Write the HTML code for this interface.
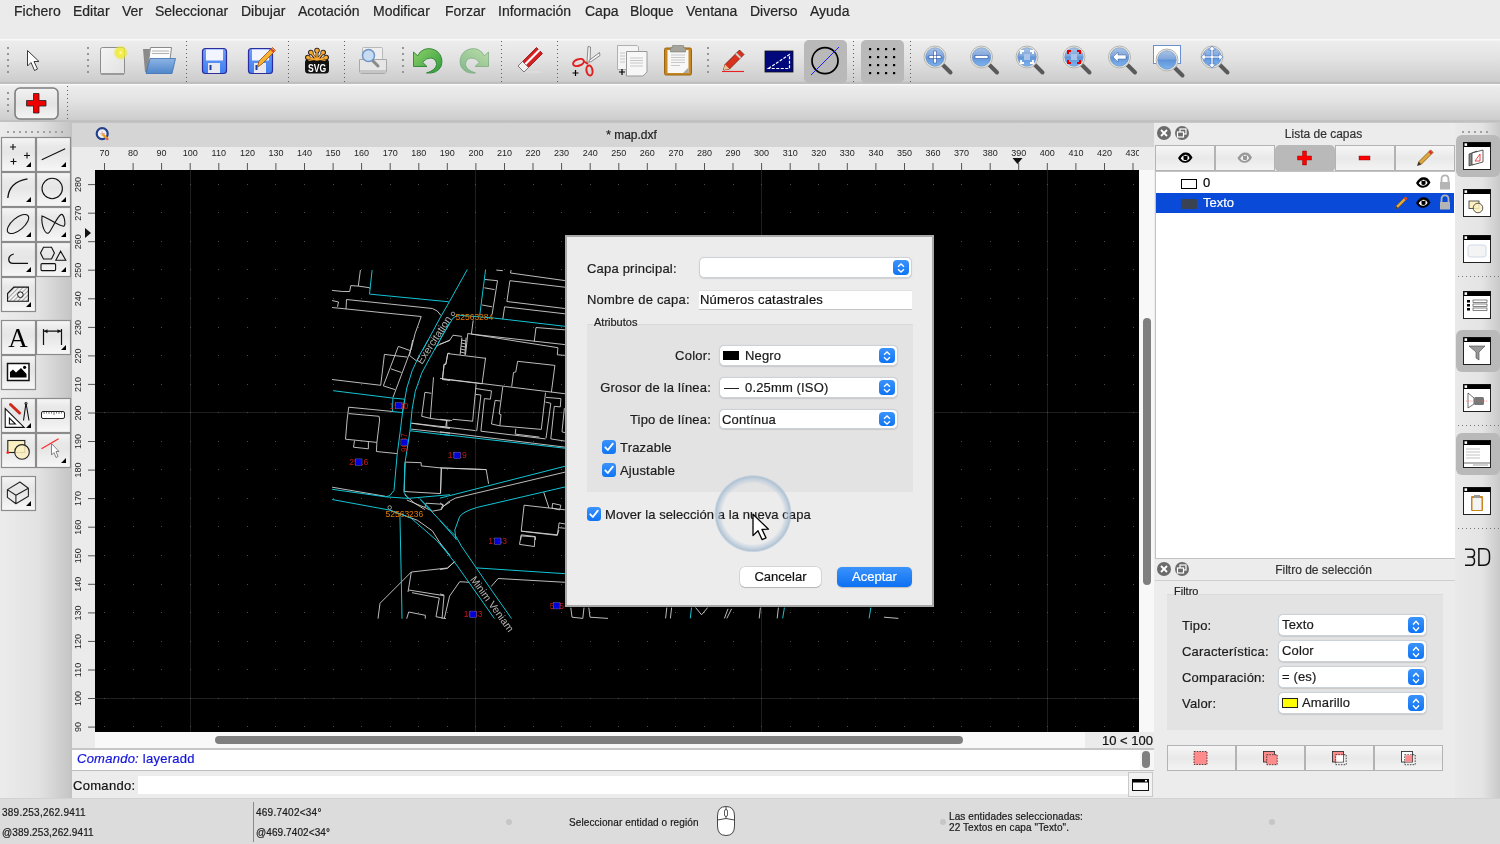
<!DOCTYPE html>
<html><head><meta charset="utf-8">
<style>
*{box-sizing:border-box;margin:0;padding:0}
body{will-change:transform}
.a,.menu span,.lbl,.cb .tx,.btn{-webkit-text-stroke:0.2px currentColor}
html,body{width:1500px;height:844px;overflow:hidden;background:#ececec;font-family:"Liberation Sans",sans-serif;color:#222}
.a{position:absolute}
.menu{position:absolute;top:0;left:0;width:1500px;height:39px;background:#ebebeb}
.menu span{position:absolute;top:3px;font-size:14px;color:#262626;line-height:17px}
.tb{position:absolute;left:0;width:1500px;background:linear-gradient(#f8f8f8 0px,#f8f8f8 1px,#ededed 2px,#e2e2e2 45%,#cdcdcd 94%,#bcbcbc 97%,#c2c2c2 100%)}
.sep{position:absolute;width:0;border-left:1px dotted #6a6a6a}
.hdl{position:absolute;width:3px;background:radial-gradient(circle,#8e8e8e 1.1px,transparent 1.3px) 0 0/3px 5px}
.hdlh{position:absolute;height:3px;background:radial-gradient(circle,#9a9a9a 1.1px,transparent 1.3px) 0 0/6px 3px}
.tbtn{position:absolute;width:35px;height:35px;border:1px solid #8f8f8f;background:linear-gradient(#e2e2e2,#f6f6f6)}
.ruler{font-size:9px;color:#222}
.ic{position:absolute}
</style></head><body>

<style>
.cb{position:absolute;background:#fff;border:1px solid #cdd2d8;border-radius:5px;box-shadow:0 0.5px 1px rgba(0,0,0,0.12)}
.cb .st{position:absolute;right:2px;top:2px;width:16px;bottom:2px;border-radius:4px;background:linear-gradient(#3b93fb,#0f74f4)}
.cb .st svg{position:absolute;left:4px;top:3px}
.cb .tx{position:absolute;left:3px;top:1px;font-size:13px;color:#1a1a1a;line-height:17px;letter-spacing:0.15px}
.lbl{position:absolute;font-size:13px;color:#1c1c1c;line-height:15px;white-space:nowrap;letter-spacing:0.2px}
.dbtn{position:absolute;border:1px solid #b3b3b3;background:linear-gradient(#f6f6f6,#e9e9e9 50%,#f3f3f3)}
</style>
<style>
.chk{position:absolute;width:14px;height:14px;border-radius:3.5px;background:linear-gradient(#3b93fb,#0f74f4)}
.chk svg{position:absolute;left:0;top:0}
.btn{position:absolute;border-radius:5px;font-size:13px;text-align:center;line-height:20px}
</style>
<!-- MENU -->
<div class="menu">
<span style="left:14px">Fichero</span>
<span style="left:73px">Editar</span>
<span style="left:122px">Ver</span>
<span style="left:155px">Seleccionar</span>
<span style="left:241px">Dibujar</span>
<span style="left:298px">Acotación</span>
<span style="left:373px">Modificar</span>
<span style="left:445px">Forzar</span>
<span style="left:498px">Información</span>
<span style="left:585px">Capa</span>
<span style="left:630px">Bloque</span>
<span style="left:686px">Ventana</span>
<span style="left:750px">Diverso</span>
<span style="left:810px">Ayuda</span>
</div>

<!-- TOOLBAR 1 -->
<div class="tb" style="top:39px;height:45px"></div>
<!-- TOOLBAR 2 -->
<div class="tb" style="top:84px;height:38px"></div>

<!-- LEFT TOOLBOX -->
<div class="a" style="left:0;top:122px;width:70px;height:676px;background:linear-gradient(90deg,#ececec 0%,#e2e2e2 55%,#c6c6c6 100%)"></div>
<div class="a" style="left:70px;top:122px;width:2px;height:676px;background:#c3c3c3"></div>

<!-- MDI -->
<div class="a" style="left:72px;top:122px;width:1082px;height:25px;background:#d5d5d5;border-top:1px solid #c4c4c4"></div>
<div class="a" style="left:72px;top:128px;width:1082px;text-align:center;font-size:12px;color:#222;padding-left:37px">* map.dxf</div>
<div class="a" style="left:72px;top:147px;width:1082px;height:23px;background:#ebebeb"></div>
<div class="a" style="left:72px;top:170px;width:23px;height:578px;background:#ebebeb"></div>
<div class="a" style="left:95px;top:170px;width:1044px;height:562px;background:#000"></div>
<div class="a" style="left:1139px;top:170px;width:15px;height:578px;background:#f8f8f8"></div>
<div class="a" style="left:95px;top:732px;width:1044px;height:16px;background:#f8f8f8"></div>
<div class="a" style="left:1085px;top:732px;width:69px;height:16px;background:#ebebeb"></div>
<div class="a" style="left:1102px;top:733px;font-size:13px;color:#111;line-height:15px">10 &lt; 100</div>
<!-- scrollbars -->
<div class="a" style="left:215px;top:736px;width:748px;height:8px;border-radius:4px;background:#7f7f7f"></div>
<div class="a" style="left:1143px;top:318px;width:8px;height:267px;border-radius:4px;background:#7f7f7f"></div>

<!-- COMMAND -->
<div class="a" style="left:72px;top:748px;width:1082px;height:2px;background:#c6c6c6"></div>
<div class="a" style="left:72px;top:750px;width:1082px;height:20px;background:#fff"></div>
<div class="a" style="left:77px;top:750px;font-size:13px;color:#1414dc;line-height:17px;letter-spacing:0.25px"><i>Comando:</i> layeradd</div>
<div class="a" style="left:1140px;top:750px;width:14px;height:20px;background:#f6f6f6"></div>
<div class="a" style="left:1142px;top:751px;width:8px;height:17px;border-radius:4px;background:#7f7f7f"></div>
<div class="a" style="left:72px;top:770px;width:1082px;height:1px;background:#bdbdbd"></div>
<div class="a" style="left:72px;top:771px;width:1082px;height:27px;background:#ececec"></div>
<div class="a" style="left:73px;top:777px;font-size:13px;color:#111;line-height:17px;letter-spacing:0.3px">Comando:</div>
<div class="a" style="left:138px;top:776px;width:990px;height:18px;background:#fff"></div>
<div class="a" style="left:1128px;top:772px;width:25px;height:25px;background:#f2f2f2;border:1px solid #c9c9c9"></div>

<!-- STATUS BAR -->
<div class="a" style="left:0;top:798px;width:1500px;height:46px;background:#dcdcdc;border-top:1px solid #d2d2d2"></div>

<svg class="a" style="left:72px;top:147px" width="1067" height="23" font-family="Liberation Sans" font-size="9" fill="#1e1e1e"><line x1="32.5" y1="16" x2="32.5" y2="23" stroke="#555" stroke-width="1"/><text x="32.5" y="8.6" text-anchor="middle">70</text><line x1="61.1" y1="16" x2="61.1" y2="23" stroke="#555" stroke-width="1"/><text x="61.1" y="8.6" text-anchor="middle">80</text><line x1="89.6" y1="16" x2="89.6" y2="23" stroke="#555" stroke-width="1"/><text x="89.6" y="8.6" text-anchor="middle">90</text><line x1="118.2" y1="16" x2="118.2" y2="23" stroke="#555" stroke-width="1"/><text x="118.2" y="8.6" text-anchor="middle">100</text><line x1="146.8" y1="16" x2="146.8" y2="23" stroke="#555" stroke-width="1"/><text x="146.8" y="8.6" text-anchor="middle">110</text><line x1="175.4" y1="16" x2="175.4" y2="23" stroke="#555" stroke-width="1"/><text x="175.4" y="8.6" text-anchor="middle">120</text><line x1="203.9" y1="16" x2="203.9" y2="23" stroke="#555" stroke-width="1"/><text x="203.9" y="8.6" text-anchor="middle">130</text><line x1="232.5" y1="16" x2="232.5" y2="23" stroke="#555" stroke-width="1"/><text x="232.5" y="8.6" text-anchor="middle">140</text><line x1="261.1" y1="16" x2="261.1" y2="23" stroke="#555" stroke-width="1"/><text x="261.1" y="8.6" text-anchor="middle">150</text><line x1="289.6" y1="16" x2="289.6" y2="23" stroke="#555" stroke-width="1"/><text x="289.6" y="8.6" text-anchor="middle">160</text><line x1="318.2" y1="16" x2="318.2" y2="23" stroke="#555" stroke-width="1"/><text x="318.2" y="8.6" text-anchor="middle">170</text><line x1="346.8" y1="16" x2="346.8" y2="23" stroke="#555" stroke-width="1"/><text x="346.8" y="8.6" text-anchor="middle">180</text><line x1="375.3" y1="16" x2="375.3" y2="23" stroke="#555" stroke-width="1"/><text x="375.3" y="8.6" text-anchor="middle">190</text><line x1="403.9" y1="16" x2="403.9" y2="23" stroke="#555" stroke-width="1"/><text x="403.9" y="8.6" text-anchor="middle">200</text><line x1="432.5" y1="16" x2="432.5" y2="23" stroke="#555" stroke-width="1"/><text x="432.5" y="8.6" text-anchor="middle">210</text><line x1="461.0" y1="16" x2="461.0" y2="23" stroke="#555" stroke-width="1"/><text x="461.0" y="8.6" text-anchor="middle">220</text><line x1="489.6" y1="16" x2="489.6" y2="23" stroke="#555" stroke-width="1"/><text x="489.6" y="8.6" text-anchor="middle">230</text><line x1="518.2" y1="16" x2="518.2" y2="23" stroke="#555" stroke-width="1"/><text x="518.2" y="8.6" text-anchor="middle">240</text><line x1="546.8" y1="16" x2="546.8" y2="23" stroke="#555" stroke-width="1"/><text x="546.8" y="8.6" text-anchor="middle">250</text><line x1="575.3" y1="16" x2="575.3" y2="23" stroke="#555" stroke-width="1"/><text x="575.3" y="8.6" text-anchor="middle">260</text><line x1="603.9" y1="16" x2="603.9" y2="23" stroke="#555" stroke-width="1"/><text x="603.9" y="8.6" text-anchor="middle">270</text><line x1="632.5" y1="16" x2="632.5" y2="23" stroke="#555" stroke-width="1"/><text x="632.5" y="8.6" text-anchor="middle">280</text><line x1="661.0" y1="16" x2="661.0" y2="23" stroke="#555" stroke-width="1"/><text x="661.0" y="8.6" text-anchor="middle">290</text><line x1="689.6" y1="16" x2="689.6" y2="23" stroke="#555" stroke-width="1"/><text x="689.6" y="8.6" text-anchor="middle">300</text><line x1="718.2" y1="16" x2="718.2" y2="23" stroke="#555" stroke-width="1"/><text x="718.2" y="8.6" text-anchor="middle">310</text><line x1="746.8" y1="16" x2="746.8" y2="23" stroke="#555" stroke-width="1"/><text x="746.8" y="8.6" text-anchor="middle">320</text><line x1="775.3" y1="16" x2="775.3" y2="23" stroke="#555" stroke-width="1"/><text x="775.3" y="8.6" text-anchor="middle">330</text><line x1="803.9" y1="16" x2="803.9" y2="23" stroke="#555" stroke-width="1"/><text x="803.9" y="8.6" text-anchor="middle">340</text><line x1="832.5" y1="16" x2="832.5" y2="23" stroke="#555" stroke-width="1"/><text x="832.5" y="8.6" text-anchor="middle">350</text><line x1="861.0" y1="16" x2="861.0" y2="23" stroke="#555" stroke-width="1"/><text x="861.0" y="8.6" text-anchor="middle">360</text><line x1="889.6" y1="16" x2="889.6" y2="23" stroke="#555" stroke-width="1"/><text x="889.6" y="8.6" text-anchor="middle">370</text><line x1="918.2" y1="16" x2="918.2" y2="23" stroke="#555" stroke-width="1"/><text x="918.2" y="8.6" text-anchor="middle">380</text><line x1="946.7" y1="16" x2="946.7" y2="23" stroke="#555" stroke-width="1"/><text x="946.7" y="8.6" text-anchor="middle">390</text><line x1="975.3" y1="16" x2="975.3" y2="23" stroke="#555" stroke-width="1"/><text x="975.3" y="8.6" text-anchor="middle">400</text><line x1="1003.9" y1="16" x2="1003.9" y2="23" stroke="#555" stroke-width="1"/><text x="1003.9" y="8.6" text-anchor="middle">410</text><line x1="1032.5" y1="16" x2="1032.5" y2="23" stroke="#555" stroke-width="1"/><text x="1032.5" y="8.6" text-anchor="middle">420</text><line x1="1061.0" y1="16" x2="1061.0" y2="23" stroke="#555" stroke-width="1"/><text x="1061.0" y="8.6" text-anchor="middle">430</text><path d="M940.5 11 L950.5 11 L945.5 17 Z" fill="#111"/></svg>
<svg class="a" style="left:72px;top:170px" width="23" height="562" font-family="Liberation Sans" font-size="9" fill="#1e1e1e"><line x1="16" y1="14.6" x2="23" y2="14.6" stroke="#555" stroke-width="1"/><text transform="translate(9.2 14.6) rotate(-90)" text-anchor="middle">280</text><line x1="16" y1="43.2" x2="23" y2="43.2" stroke="#555" stroke-width="1"/><text transform="translate(9.2 43.2) rotate(-90)" text-anchor="middle">270</text><line x1="16" y1="71.7" x2="23" y2="71.7" stroke="#555" stroke-width="1"/><text transform="translate(9.2 71.7) rotate(-90)" text-anchor="middle">260</text><line x1="16" y1="100.2" x2="23" y2="100.2" stroke="#555" stroke-width="1"/><text transform="translate(9.2 100.2) rotate(-90)" text-anchor="middle">250</text><line x1="16" y1="128.8" x2="23" y2="128.8" stroke="#555" stroke-width="1"/><text transform="translate(9.2 128.8) rotate(-90)" text-anchor="middle">240</text><line x1="16" y1="157.4" x2="23" y2="157.4" stroke="#555" stroke-width="1"/><text transform="translate(9.2 157.4) rotate(-90)" text-anchor="middle">230</text><line x1="16" y1="185.9" x2="23" y2="185.9" stroke="#555" stroke-width="1"/><text transform="translate(9.2 185.9) rotate(-90)" text-anchor="middle">220</text><line x1="16" y1="214.4" x2="23" y2="214.4" stroke="#555" stroke-width="1"/><text transform="translate(9.2 214.4) rotate(-90)" text-anchor="middle">210</text><line x1="16" y1="243.0" x2="23" y2="243.0" stroke="#555" stroke-width="1"/><text transform="translate(9.2 243.0) rotate(-90)" text-anchor="middle">200</text><line x1="16" y1="271.5" x2="23" y2="271.5" stroke="#555" stroke-width="1"/><text transform="translate(9.2 271.5) rotate(-90)" text-anchor="middle">190</text><line x1="16" y1="300.1" x2="23" y2="300.1" stroke="#555" stroke-width="1"/><text transform="translate(9.2 300.1) rotate(-90)" text-anchor="middle">180</text><line x1="16" y1="328.6" x2="23" y2="328.6" stroke="#555" stroke-width="1"/><text transform="translate(9.2 328.6) rotate(-90)" text-anchor="middle">170</text><line x1="16" y1="357.2" x2="23" y2="357.2" stroke="#555" stroke-width="1"/><text transform="translate(9.2 357.2) rotate(-90)" text-anchor="middle">160</text><line x1="16" y1="385.8" x2="23" y2="385.8" stroke="#555" stroke-width="1"/><text transform="translate(9.2 385.8) rotate(-90)" text-anchor="middle">150</text><line x1="16" y1="414.3" x2="23" y2="414.3" stroke="#555" stroke-width="1"/><text transform="translate(9.2 414.3) rotate(-90)" text-anchor="middle">140</text><line x1="16" y1="442.9" x2="23" y2="442.9" stroke="#555" stroke-width="1"/><text transform="translate(9.2 442.9) rotate(-90)" text-anchor="middle">130</text><line x1="16" y1="471.4" x2="23" y2="471.4" stroke="#555" stroke-width="1"/><text transform="translate(9.2 471.4) rotate(-90)" text-anchor="middle">120</text><line x1="16" y1="500.0" x2="23" y2="500.0" stroke="#555" stroke-width="1"/><text transform="translate(9.2 500.0) rotate(-90)" text-anchor="middle">110</text><line x1="16" y1="528.5" x2="23" y2="528.5" stroke="#555" stroke-width="1"/><text transform="translate(9.2 528.5) rotate(-90)" text-anchor="middle">100</text><line x1="16" y1="557.1" x2="23" y2="557.1" stroke="#555" stroke-width="1"/><text transform="translate(9.2 557.1) rotate(-90)" text-anchor="middle">90</text><path d="M13 58.1 L19 63.1 L13 68.1 Z" fill="#111"/></svg>
<svg class="a" style="left:95px;top:170px" width="1044" height="562"><line x1="95.5" y1="0" x2="95.5" y2="562" stroke="#1f1f1f" stroke-width="1"/><line x1="380.5" y1="0" x2="380.5" y2="562" stroke="#1f1f1f" stroke-width="1"/><line x1="666.5" y1="0" x2="666.5" y2="562" stroke="#1f1f1f" stroke-width="1"/><line x1="952.5" y1="0" x2="952.5" y2="562" stroke="#1f1f1f" stroke-width="1"/><line x1="0" y1="242.5" x2="1044" y2="242.5" stroke="#1f1f1f" stroke-width="1"/><line x1="0" y1="528.5" x2="1044" y2="528.5" stroke="#1f1f1f" stroke-width="1"/><rect x="9" y="556" width="1" height="1" fill="#4c4c4c"/><rect x="9" y="528" width="1" height="1" fill="#4c4c4c"/><rect x="9" y="499" width="1" height="1" fill="#4c4c4c"/><rect x="9" y="471" width="1" height="1" fill="#4c4c4c"/><rect x="9" y="442" width="1" height="1" fill="#4c4c4c"/><rect x="9" y="414" width="1" height="1" fill="#4c4c4c"/><rect x="9" y="385" width="1" height="1" fill="#4c4c4c"/><rect x="9" y="356" width="1" height="1" fill="#4c4c4c"/><rect x="9" y="328" width="1" height="1" fill="#4c4c4c"/><rect x="9" y="299" width="1" height="1" fill="#4c4c4c"/><rect x="9" y="271" width="1" height="1" fill="#4c4c4c"/><rect x="9" y="242" width="1" height="1" fill="#4c4c4c"/><rect x="9" y="214" width="1" height="1" fill="#4c4c4c"/><rect x="9" y="185" width="1" height="1" fill="#4c4c4c"/><rect x="9" y="157" width="1" height="1" fill="#4c4c4c"/><rect x="9" y="128" width="1" height="1" fill="#4c4c4c"/><rect x="9" y="99" width="1" height="1" fill="#4c4c4c"/><rect x="9" y="71" width="1" height="1" fill="#4c4c4c"/><rect x="9" y="42" width="1" height="1" fill="#4c4c4c"/><rect x="9" y="14" width="1" height="1" fill="#4c4c4c"/><rect x="38" y="556" width="1" height="1" fill="#4c4c4c"/><rect x="38" y="528" width="1" height="1" fill="#4c4c4c"/><rect x="38" y="499" width="1" height="1" fill="#4c4c4c"/><rect x="38" y="471" width="1" height="1" fill="#4c4c4c"/><rect x="38" y="442" width="1" height="1" fill="#4c4c4c"/><rect x="38" y="414" width="1" height="1" fill="#4c4c4c"/><rect x="38" y="385" width="1" height="1" fill="#4c4c4c"/><rect x="38" y="356" width="1" height="1" fill="#4c4c4c"/><rect x="38" y="328" width="1" height="1" fill="#4c4c4c"/><rect x="38" y="299" width="1" height="1" fill="#4c4c4c"/><rect x="38" y="271" width="1" height="1" fill="#4c4c4c"/><rect x="38" y="242" width="1" height="1" fill="#4c4c4c"/><rect x="38" y="214" width="1" height="1" fill="#4c4c4c"/><rect x="38" y="185" width="1" height="1" fill="#4c4c4c"/><rect x="38" y="157" width="1" height="1" fill="#4c4c4c"/><rect x="38" y="128" width="1" height="1" fill="#4c4c4c"/><rect x="38" y="99" width="1" height="1" fill="#4c4c4c"/><rect x="38" y="71" width="1" height="1" fill="#4c4c4c"/><rect x="38" y="42" width="1" height="1" fill="#4c4c4c"/><rect x="38" y="14" width="1" height="1" fill="#4c4c4c"/><rect x="66" y="556" width="1" height="1" fill="#4c4c4c"/><rect x="66" y="528" width="1" height="1" fill="#4c4c4c"/><rect x="66" y="499" width="1" height="1" fill="#4c4c4c"/><rect x="66" y="471" width="1" height="1" fill="#4c4c4c"/><rect x="66" y="442" width="1" height="1" fill="#4c4c4c"/><rect x="66" y="414" width="1" height="1" fill="#4c4c4c"/><rect x="66" y="385" width="1" height="1" fill="#4c4c4c"/><rect x="66" y="356" width="1" height="1" fill="#4c4c4c"/><rect x="66" y="328" width="1" height="1" fill="#4c4c4c"/><rect x="66" y="299" width="1" height="1" fill="#4c4c4c"/><rect x="66" y="271" width="1" height="1" fill="#4c4c4c"/><rect x="66" y="242" width="1" height="1" fill="#4c4c4c"/><rect x="66" y="214" width="1" height="1" fill="#4c4c4c"/><rect x="66" y="185" width="1" height="1" fill="#4c4c4c"/><rect x="66" y="157" width="1" height="1" fill="#4c4c4c"/><rect x="66" y="128" width="1" height="1" fill="#4c4c4c"/><rect x="66" y="99" width="1" height="1" fill="#4c4c4c"/><rect x="66" y="71" width="1" height="1" fill="#4c4c4c"/><rect x="66" y="42" width="1" height="1" fill="#4c4c4c"/><rect x="66" y="14" width="1" height="1" fill="#4c4c4c"/><rect x="95" y="556" width="1" height="1" fill="#4c4c4c"/><rect x="95" y="528" width="1" height="1" fill="#4c4c4c"/><rect x="95" y="499" width="1" height="1" fill="#4c4c4c"/><rect x="95" y="471" width="1" height="1" fill="#4c4c4c"/><rect x="95" y="442" width="1" height="1" fill="#4c4c4c"/><rect x="95" y="414" width="1" height="1" fill="#4c4c4c"/><rect x="95" y="385" width="1" height="1" fill="#4c4c4c"/><rect x="95" y="356" width="1" height="1" fill="#4c4c4c"/><rect x="95" y="328" width="1" height="1" fill="#4c4c4c"/><rect x="95" y="299" width="1" height="1" fill="#4c4c4c"/><rect x="95" y="271" width="1" height="1" fill="#4c4c4c"/><rect x="95" y="242" width="1" height="1" fill="#4c4c4c"/><rect x="95" y="214" width="1" height="1" fill="#4c4c4c"/><rect x="95" y="185" width="1" height="1" fill="#4c4c4c"/><rect x="95" y="157" width="1" height="1" fill="#4c4c4c"/><rect x="95" y="128" width="1" height="1" fill="#4c4c4c"/><rect x="95" y="99" width="1" height="1" fill="#4c4c4c"/><rect x="95" y="71" width="1" height="1" fill="#4c4c4c"/><rect x="95" y="42" width="1" height="1" fill="#4c4c4c"/><rect x="95" y="14" width="1" height="1" fill="#4c4c4c"/><rect x="123" y="556" width="1" height="1" fill="#4c4c4c"/><rect x="123" y="528" width="1" height="1" fill="#4c4c4c"/><rect x="123" y="499" width="1" height="1" fill="#4c4c4c"/><rect x="123" y="471" width="1" height="1" fill="#4c4c4c"/><rect x="123" y="442" width="1" height="1" fill="#4c4c4c"/><rect x="123" y="414" width="1" height="1" fill="#4c4c4c"/><rect x="123" y="385" width="1" height="1" fill="#4c4c4c"/><rect x="123" y="356" width="1" height="1" fill="#4c4c4c"/><rect x="123" y="328" width="1" height="1" fill="#4c4c4c"/><rect x="123" y="299" width="1" height="1" fill="#4c4c4c"/><rect x="123" y="271" width="1" height="1" fill="#4c4c4c"/><rect x="123" y="242" width="1" height="1" fill="#4c4c4c"/><rect x="123" y="214" width="1" height="1" fill="#4c4c4c"/><rect x="123" y="185" width="1" height="1" fill="#4c4c4c"/><rect x="123" y="157" width="1" height="1" fill="#4c4c4c"/><rect x="123" y="128" width="1" height="1" fill="#4c4c4c"/><rect x="123" y="99" width="1" height="1" fill="#4c4c4c"/><rect x="123" y="71" width="1" height="1" fill="#4c4c4c"/><rect x="123" y="42" width="1" height="1" fill="#4c4c4c"/><rect x="123" y="14" width="1" height="1" fill="#4c4c4c"/><rect x="152" y="556" width="1" height="1" fill="#4c4c4c"/><rect x="152" y="528" width="1" height="1" fill="#4c4c4c"/><rect x="152" y="499" width="1" height="1" fill="#4c4c4c"/><rect x="152" y="471" width="1" height="1" fill="#4c4c4c"/><rect x="152" y="442" width="1" height="1" fill="#4c4c4c"/><rect x="152" y="414" width="1" height="1" fill="#4c4c4c"/><rect x="152" y="385" width="1" height="1" fill="#4c4c4c"/><rect x="152" y="356" width="1" height="1" fill="#4c4c4c"/><rect x="152" y="328" width="1" height="1" fill="#4c4c4c"/><rect x="152" y="299" width="1" height="1" fill="#4c4c4c"/><rect x="152" y="271" width="1" height="1" fill="#4c4c4c"/><rect x="152" y="242" width="1" height="1" fill="#4c4c4c"/><rect x="152" y="214" width="1" height="1" fill="#4c4c4c"/><rect x="152" y="185" width="1" height="1" fill="#4c4c4c"/><rect x="152" y="157" width="1" height="1" fill="#4c4c4c"/><rect x="152" y="128" width="1" height="1" fill="#4c4c4c"/><rect x="152" y="99" width="1" height="1" fill="#4c4c4c"/><rect x="152" y="71" width="1" height="1" fill="#4c4c4c"/><rect x="152" y="42" width="1" height="1" fill="#4c4c4c"/><rect x="152" y="14" width="1" height="1" fill="#4c4c4c"/><rect x="180" y="556" width="1" height="1" fill="#4c4c4c"/><rect x="180" y="528" width="1" height="1" fill="#4c4c4c"/><rect x="180" y="499" width="1" height="1" fill="#4c4c4c"/><rect x="180" y="471" width="1" height="1" fill="#4c4c4c"/><rect x="180" y="442" width="1" height="1" fill="#4c4c4c"/><rect x="180" y="414" width="1" height="1" fill="#4c4c4c"/><rect x="180" y="385" width="1" height="1" fill="#4c4c4c"/><rect x="180" y="356" width="1" height="1" fill="#4c4c4c"/><rect x="180" y="328" width="1" height="1" fill="#4c4c4c"/><rect x="180" y="299" width="1" height="1" fill="#4c4c4c"/><rect x="180" y="271" width="1" height="1" fill="#4c4c4c"/><rect x="180" y="242" width="1" height="1" fill="#4c4c4c"/><rect x="180" y="214" width="1" height="1" fill="#4c4c4c"/><rect x="180" y="185" width="1" height="1" fill="#4c4c4c"/><rect x="180" y="157" width="1" height="1" fill="#4c4c4c"/><rect x="180" y="128" width="1" height="1" fill="#4c4c4c"/><rect x="180" y="99" width="1" height="1" fill="#4c4c4c"/><rect x="180" y="71" width="1" height="1" fill="#4c4c4c"/><rect x="180" y="42" width="1" height="1" fill="#4c4c4c"/><rect x="180" y="14" width="1" height="1" fill="#4c4c4c"/><rect x="209" y="556" width="1" height="1" fill="#4c4c4c"/><rect x="209" y="528" width="1" height="1" fill="#4c4c4c"/><rect x="209" y="499" width="1" height="1" fill="#4c4c4c"/><rect x="209" y="471" width="1" height="1" fill="#4c4c4c"/><rect x="209" y="442" width="1" height="1" fill="#4c4c4c"/><rect x="209" y="414" width="1" height="1" fill="#4c4c4c"/><rect x="209" y="385" width="1" height="1" fill="#4c4c4c"/><rect x="209" y="356" width="1" height="1" fill="#4c4c4c"/><rect x="209" y="328" width="1" height="1" fill="#4c4c4c"/><rect x="209" y="299" width="1" height="1" fill="#4c4c4c"/><rect x="209" y="271" width="1" height="1" fill="#4c4c4c"/><rect x="209" y="242" width="1" height="1" fill="#4c4c4c"/><rect x="209" y="214" width="1" height="1" fill="#4c4c4c"/><rect x="209" y="185" width="1" height="1" fill="#4c4c4c"/><rect x="209" y="157" width="1" height="1" fill="#4c4c4c"/><rect x="209" y="128" width="1" height="1" fill="#4c4c4c"/><rect x="209" y="99" width="1" height="1" fill="#4c4c4c"/><rect x="209" y="71" width="1" height="1" fill="#4c4c4c"/><rect x="209" y="42" width="1" height="1" fill="#4c4c4c"/><rect x="209" y="14" width="1" height="1" fill="#4c4c4c"/><rect x="238" y="556" width="1" height="1" fill="#4c4c4c"/><rect x="238" y="528" width="1" height="1" fill="#4c4c4c"/><rect x="238" y="499" width="1" height="1" fill="#4c4c4c"/><rect x="238" y="471" width="1" height="1" fill="#4c4c4c"/><rect x="238" y="442" width="1" height="1" fill="#4c4c4c"/><rect x="238" y="414" width="1" height="1" fill="#4c4c4c"/><rect x="238" y="385" width="1" height="1" fill="#4c4c4c"/><rect x="238" y="356" width="1" height="1" fill="#4c4c4c"/><rect x="238" y="328" width="1" height="1" fill="#4c4c4c"/><rect x="238" y="299" width="1" height="1" fill="#4c4c4c"/><rect x="238" y="271" width="1" height="1" fill="#4c4c4c"/><rect x="238" y="242" width="1" height="1" fill="#4c4c4c"/><rect x="238" y="214" width="1" height="1" fill="#4c4c4c"/><rect x="238" y="185" width="1" height="1" fill="#4c4c4c"/><rect x="238" y="157" width="1" height="1" fill="#4c4c4c"/><rect x="238" y="128" width="1" height="1" fill="#4c4c4c"/><rect x="238" y="99" width="1" height="1" fill="#4c4c4c"/><rect x="238" y="71" width="1" height="1" fill="#4c4c4c"/><rect x="238" y="42" width="1" height="1" fill="#4c4c4c"/><rect x="238" y="14" width="1" height="1" fill="#4c4c4c"/><rect x="266" y="556" width="1" height="1" fill="#4c4c4c"/><rect x="266" y="528" width="1" height="1" fill="#4c4c4c"/><rect x="266" y="499" width="1" height="1" fill="#4c4c4c"/><rect x="266" y="471" width="1" height="1" fill="#4c4c4c"/><rect x="266" y="442" width="1" height="1" fill="#4c4c4c"/><rect x="266" y="414" width="1" height="1" fill="#4c4c4c"/><rect x="266" y="385" width="1" height="1" fill="#4c4c4c"/><rect x="266" y="356" width="1" height="1" fill="#4c4c4c"/><rect x="266" y="328" width="1" height="1" fill="#4c4c4c"/><rect x="266" y="299" width="1" height="1" fill="#4c4c4c"/><rect x="266" y="271" width="1" height="1" fill="#4c4c4c"/><rect x="266" y="242" width="1" height="1" fill="#4c4c4c"/><rect x="266" y="214" width="1" height="1" fill="#4c4c4c"/><rect x="266" y="185" width="1" height="1" fill="#4c4c4c"/><rect x="266" y="157" width="1" height="1" fill="#4c4c4c"/><rect x="266" y="128" width="1" height="1" fill="#4c4c4c"/><rect x="266" y="99" width="1" height="1" fill="#4c4c4c"/><rect x="266" y="71" width="1" height="1" fill="#4c4c4c"/><rect x="266" y="42" width="1" height="1" fill="#4c4c4c"/><rect x="266" y="14" width="1" height="1" fill="#4c4c4c"/><rect x="295" y="556" width="1" height="1" fill="#4c4c4c"/><rect x="295" y="528" width="1" height="1" fill="#4c4c4c"/><rect x="295" y="499" width="1" height="1" fill="#4c4c4c"/><rect x="295" y="471" width="1" height="1" fill="#4c4c4c"/><rect x="295" y="442" width="1" height="1" fill="#4c4c4c"/><rect x="295" y="414" width="1" height="1" fill="#4c4c4c"/><rect x="295" y="385" width="1" height="1" fill="#4c4c4c"/><rect x="295" y="356" width="1" height="1" fill="#4c4c4c"/><rect x="295" y="328" width="1" height="1" fill="#4c4c4c"/><rect x="295" y="299" width="1" height="1" fill="#4c4c4c"/><rect x="295" y="271" width="1" height="1" fill="#4c4c4c"/><rect x="295" y="242" width="1" height="1" fill="#4c4c4c"/><rect x="295" y="214" width="1" height="1" fill="#4c4c4c"/><rect x="295" y="185" width="1" height="1" fill="#4c4c4c"/><rect x="295" y="157" width="1" height="1" fill="#4c4c4c"/><rect x="295" y="128" width="1" height="1" fill="#4c4c4c"/><rect x="295" y="99" width="1" height="1" fill="#4c4c4c"/><rect x="295" y="71" width="1" height="1" fill="#4c4c4c"/><rect x="295" y="42" width="1" height="1" fill="#4c4c4c"/><rect x="295" y="14" width="1" height="1" fill="#4c4c4c"/><rect x="323" y="556" width="1" height="1" fill="#4c4c4c"/><rect x="323" y="528" width="1" height="1" fill="#4c4c4c"/><rect x="323" y="499" width="1" height="1" fill="#4c4c4c"/><rect x="323" y="471" width="1" height="1" fill="#4c4c4c"/><rect x="323" y="442" width="1" height="1" fill="#4c4c4c"/><rect x="323" y="414" width="1" height="1" fill="#4c4c4c"/><rect x="323" y="385" width="1" height="1" fill="#4c4c4c"/><rect x="323" y="356" width="1" height="1" fill="#4c4c4c"/><rect x="323" y="328" width="1" height="1" fill="#4c4c4c"/><rect x="323" y="299" width="1" height="1" fill="#4c4c4c"/><rect x="323" y="271" width="1" height="1" fill="#4c4c4c"/><rect x="323" y="242" width="1" height="1" fill="#4c4c4c"/><rect x="323" y="214" width="1" height="1" fill="#4c4c4c"/><rect x="323" y="185" width="1" height="1" fill="#4c4c4c"/><rect x="323" y="157" width="1" height="1" fill="#4c4c4c"/><rect x="323" y="128" width="1" height="1" fill="#4c4c4c"/><rect x="323" y="99" width="1" height="1" fill="#4c4c4c"/><rect x="323" y="71" width="1" height="1" fill="#4c4c4c"/><rect x="323" y="42" width="1" height="1" fill="#4c4c4c"/><rect x="323" y="14" width="1" height="1" fill="#4c4c4c"/><rect x="352" y="556" width="1" height="1" fill="#4c4c4c"/><rect x="352" y="528" width="1" height="1" fill="#4c4c4c"/><rect x="352" y="499" width="1" height="1" fill="#4c4c4c"/><rect x="352" y="471" width="1" height="1" fill="#4c4c4c"/><rect x="352" y="442" width="1" height="1" fill="#4c4c4c"/><rect x="352" y="414" width="1" height="1" fill="#4c4c4c"/><rect x="352" y="385" width="1" height="1" fill="#4c4c4c"/><rect x="352" y="356" width="1" height="1" fill="#4c4c4c"/><rect x="352" y="328" width="1" height="1" fill="#4c4c4c"/><rect x="352" y="299" width="1" height="1" fill="#4c4c4c"/><rect x="352" y="271" width="1" height="1" fill="#4c4c4c"/><rect x="352" y="242" width="1" height="1" fill="#4c4c4c"/><rect x="352" y="214" width="1" height="1" fill="#4c4c4c"/><rect x="352" y="185" width="1" height="1" fill="#4c4c4c"/><rect x="352" y="157" width="1" height="1" fill="#4c4c4c"/><rect x="352" y="128" width="1" height="1" fill="#4c4c4c"/><rect x="352" y="99" width="1" height="1" fill="#4c4c4c"/><rect x="352" y="71" width="1" height="1" fill="#4c4c4c"/><rect x="352" y="42" width="1" height="1" fill="#4c4c4c"/><rect x="352" y="14" width="1" height="1" fill="#4c4c4c"/><rect x="380" y="556" width="1" height="1" fill="#4c4c4c"/><rect x="380" y="528" width="1" height="1" fill="#4c4c4c"/><rect x="380" y="499" width="1" height="1" fill="#4c4c4c"/><rect x="380" y="471" width="1" height="1" fill="#4c4c4c"/><rect x="380" y="442" width="1" height="1" fill="#4c4c4c"/><rect x="380" y="414" width="1" height="1" fill="#4c4c4c"/><rect x="380" y="385" width="1" height="1" fill="#4c4c4c"/><rect x="380" y="356" width="1" height="1" fill="#4c4c4c"/><rect x="380" y="328" width="1" height="1" fill="#4c4c4c"/><rect x="380" y="299" width="1" height="1" fill="#4c4c4c"/><rect x="380" y="271" width="1" height="1" fill="#4c4c4c"/><rect x="380" y="242" width="1" height="1" fill="#4c4c4c"/><rect x="380" y="214" width="1" height="1" fill="#4c4c4c"/><rect x="380" y="185" width="1" height="1" fill="#4c4c4c"/><rect x="380" y="157" width="1" height="1" fill="#4c4c4c"/><rect x="380" y="128" width="1" height="1" fill="#4c4c4c"/><rect x="380" y="99" width="1" height="1" fill="#4c4c4c"/><rect x="380" y="71" width="1" height="1" fill="#4c4c4c"/><rect x="380" y="42" width="1" height="1" fill="#4c4c4c"/><rect x="380" y="14" width="1" height="1" fill="#4c4c4c"/><rect x="409" y="556" width="1" height="1" fill="#4c4c4c"/><rect x="409" y="528" width="1" height="1" fill="#4c4c4c"/><rect x="409" y="499" width="1" height="1" fill="#4c4c4c"/><rect x="409" y="471" width="1" height="1" fill="#4c4c4c"/><rect x="409" y="442" width="1" height="1" fill="#4c4c4c"/><rect x="409" y="414" width="1" height="1" fill="#4c4c4c"/><rect x="409" y="385" width="1" height="1" fill="#4c4c4c"/><rect x="409" y="356" width="1" height="1" fill="#4c4c4c"/><rect x="409" y="328" width="1" height="1" fill="#4c4c4c"/><rect x="409" y="299" width="1" height="1" fill="#4c4c4c"/><rect x="409" y="271" width="1" height="1" fill="#4c4c4c"/><rect x="409" y="242" width="1" height="1" fill="#4c4c4c"/><rect x="409" y="214" width="1" height="1" fill="#4c4c4c"/><rect x="409" y="185" width="1" height="1" fill="#4c4c4c"/><rect x="409" y="157" width="1" height="1" fill="#4c4c4c"/><rect x="409" y="128" width="1" height="1" fill="#4c4c4c"/><rect x="409" y="99" width="1" height="1" fill="#4c4c4c"/><rect x="409" y="71" width="1" height="1" fill="#4c4c4c"/><rect x="409" y="42" width="1" height="1" fill="#4c4c4c"/><rect x="409" y="14" width="1" height="1" fill="#4c4c4c"/><rect x="438" y="556" width="1" height="1" fill="#4c4c4c"/><rect x="438" y="528" width="1" height="1" fill="#4c4c4c"/><rect x="438" y="499" width="1" height="1" fill="#4c4c4c"/><rect x="438" y="471" width="1" height="1" fill="#4c4c4c"/><rect x="438" y="442" width="1" height="1" fill="#4c4c4c"/><rect x="438" y="414" width="1" height="1" fill="#4c4c4c"/><rect x="438" y="385" width="1" height="1" fill="#4c4c4c"/><rect x="438" y="356" width="1" height="1" fill="#4c4c4c"/><rect x="438" y="328" width="1" height="1" fill="#4c4c4c"/><rect x="438" y="299" width="1" height="1" fill="#4c4c4c"/><rect x="438" y="271" width="1" height="1" fill="#4c4c4c"/><rect x="438" y="242" width="1" height="1" fill="#4c4c4c"/><rect x="438" y="214" width="1" height="1" fill="#4c4c4c"/><rect x="438" y="185" width="1" height="1" fill="#4c4c4c"/><rect x="438" y="157" width="1" height="1" fill="#4c4c4c"/><rect x="438" y="128" width="1" height="1" fill="#4c4c4c"/><rect x="438" y="99" width="1" height="1" fill="#4c4c4c"/><rect x="438" y="71" width="1" height="1" fill="#4c4c4c"/><rect x="438" y="42" width="1" height="1" fill="#4c4c4c"/><rect x="438" y="14" width="1" height="1" fill="#4c4c4c"/><rect x="466" y="556" width="1" height="1" fill="#4c4c4c"/><rect x="466" y="528" width="1" height="1" fill="#4c4c4c"/><rect x="466" y="499" width="1" height="1" fill="#4c4c4c"/><rect x="466" y="471" width="1" height="1" fill="#4c4c4c"/><rect x="466" y="442" width="1" height="1" fill="#4c4c4c"/><rect x="466" y="414" width="1" height="1" fill="#4c4c4c"/><rect x="466" y="385" width="1" height="1" fill="#4c4c4c"/><rect x="466" y="356" width="1" height="1" fill="#4c4c4c"/><rect x="466" y="328" width="1" height="1" fill="#4c4c4c"/><rect x="466" y="299" width="1" height="1" fill="#4c4c4c"/><rect x="466" y="271" width="1" height="1" fill="#4c4c4c"/><rect x="466" y="242" width="1" height="1" fill="#4c4c4c"/><rect x="466" y="214" width="1" height="1" fill="#4c4c4c"/><rect x="466" y="185" width="1" height="1" fill="#4c4c4c"/><rect x="466" y="157" width="1" height="1" fill="#4c4c4c"/><rect x="466" y="128" width="1" height="1" fill="#4c4c4c"/><rect x="466" y="99" width="1" height="1" fill="#4c4c4c"/><rect x="466" y="71" width="1" height="1" fill="#4c4c4c"/><rect x="466" y="42" width="1" height="1" fill="#4c4c4c"/><rect x="466" y="14" width="1" height="1" fill="#4c4c4c"/><rect x="495" y="556" width="1" height="1" fill="#4c4c4c"/><rect x="495" y="528" width="1" height="1" fill="#4c4c4c"/><rect x="495" y="499" width="1" height="1" fill="#4c4c4c"/><rect x="495" y="471" width="1" height="1" fill="#4c4c4c"/><rect x="495" y="442" width="1" height="1" fill="#4c4c4c"/><rect x="495" y="414" width="1" height="1" fill="#4c4c4c"/><rect x="495" y="385" width="1" height="1" fill="#4c4c4c"/><rect x="495" y="356" width="1" height="1" fill="#4c4c4c"/><rect x="495" y="328" width="1" height="1" fill="#4c4c4c"/><rect x="495" y="299" width="1" height="1" fill="#4c4c4c"/><rect x="495" y="271" width="1" height="1" fill="#4c4c4c"/><rect x="495" y="242" width="1" height="1" fill="#4c4c4c"/><rect x="495" y="214" width="1" height="1" fill="#4c4c4c"/><rect x="495" y="185" width="1" height="1" fill="#4c4c4c"/><rect x="495" y="157" width="1" height="1" fill="#4c4c4c"/><rect x="495" y="128" width="1" height="1" fill="#4c4c4c"/><rect x="495" y="99" width="1" height="1" fill="#4c4c4c"/><rect x="495" y="71" width="1" height="1" fill="#4c4c4c"/><rect x="495" y="42" width="1" height="1" fill="#4c4c4c"/><rect x="495" y="14" width="1" height="1" fill="#4c4c4c"/><rect x="523" y="556" width="1" height="1" fill="#4c4c4c"/><rect x="523" y="528" width="1" height="1" fill="#4c4c4c"/><rect x="523" y="499" width="1" height="1" fill="#4c4c4c"/><rect x="523" y="471" width="1" height="1" fill="#4c4c4c"/><rect x="523" y="442" width="1" height="1" fill="#4c4c4c"/><rect x="523" y="414" width="1" height="1" fill="#4c4c4c"/><rect x="523" y="385" width="1" height="1" fill="#4c4c4c"/><rect x="523" y="356" width="1" height="1" fill="#4c4c4c"/><rect x="523" y="328" width="1" height="1" fill="#4c4c4c"/><rect x="523" y="299" width="1" height="1" fill="#4c4c4c"/><rect x="523" y="271" width="1" height="1" fill="#4c4c4c"/><rect x="523" y="242" width="1" height="1" fill="#4c4c4c"/><rect x="523" y="214" width="1" height="1" fill="#4c4c4c"/><rect x="523" y="185" width="1" height="1" fill="#4c4c4c"/><rect x="523" y="157" width="1" height="1" fill="#4c4c4c"/><rect x="523" y="128" width="1" height="1" fill="#4c4c4c"/><rect x="523" y="99" width="1" height="1" fill="#4c4c4c"/><rect x="523" y="71" width="1" height="1" fill="#4c4c4c"/><rect x="523" y="42" width="1" height="1" fill="#4c4c4c"/><rect x="523" y="14" width="1" height="1" fill="#4c4c4c"/><rect x="552" y="556" width="1" height="1" fill="#4c4c4c"/><rect x="552" y="528" width="1" height="1" fill="#4c4c4c"/><rect x="552" y="499" width="1" height="1" fill="#4c4c4c"/><rect x="552" y="471" width="1" height="1" fill="#4c4c4c"/><rect x="552" y="442" width="1" height="1" fill="#4c4c4c"/><rect x="552" y="414" width="1" height="1" fill="#4c4c4c"/><rect x="552" y="385" width="1" height="1" fill="#4c4c4c"/><rect x="552" y="356" width="1" height="1" fill="#4c4c4c"/><rect x="552" y="328" width="1" height="1" fill="#4c4c4c"/><rect x="552" y="299" width="1" height="1" fill="#4c4c4c"/><rect x="552" y="271" width="1" height="1" fill="#4c4c4c"/><rect x="552" y="242" width="1" height="1" fill="#4c4c4c"/><rect x="552" y="214" width="1" height="1" fill="#4c4c4c"/><rect x="552" y="185" width="1" height="1" fill="#4c4c4c"/><rect x="552" y="157" width="1" height="1" fill="#4c4c4c"/><rect x="552" y="128" width="1" height="1" fill="#4c4c4c"/><rect x="552" y="99" width="1" height="1" fill="#4c4c4c"/><rect x="552" y="71" width="1" height="1" fill="#4c4c4c"/><rect x="552" y="42" width="1" height="1" fill="#4c4c4c"/><rect x="552" y="14" width="1" height="1" fill="#4c4c4c"/><rect x="580" y="556" width="1" height="1" fill="#4c4c4c"/><rect x="580" y="528" width="1" height="1" fill="#4c4c4c"/><rect x="580" y="499" width="1" height="1" fill="#4c4c4c"/><rect x="580" y="471" width="1" height="1" fill="#4c4c4c"/><rect x="580" y="442" width="1" height="1" fill="#4c4c4c"/><rect x="580" y="414" width="1" height="1" fill="#4c4c4c"/><rect x="580" y="385" width="1" height="1" fill="#4c4c4c"/><rect x="580" y="356" width="1" height="1" fill="#4c4c4c"/><rect x="580" y="328" width="1" height="1" fill="#4c4c4c"/><rect x="580" y="299" width="1" height="1" fill="#4c4c4c"/><rect x="580" y="271" width="1" height="1" fill="#4c4c4c"/><rect x="580" y="242" width="1" height="1" fill="#4c4c4c"/><rect x="580" y="214" width="1" height="1" fill="#4c4c4c"/><rect x="580" y="185" width="1" height="1" fill="#4c4c4c"/><rect x="580" y="157" width="1" height="1" fill="#4c4c4c"/><rect x="580" y="128" width="1" height="1" fill="#4c4c4c"/><rect x="580" y="99" width="1" height="1" fill="#4c4c4c"/><rect x="580" y="71" width="1" height="1" fill="#4c4c4c"/><rect x="580" y="42" width="1" height="1" fill="#4c4c4c"/><rect x="580" y="14" width="1" height="1" fill="#4c4c4c"/><rect x="609" y="556" width="1" height="1" fill="#4c4c4c"/><rect x="609" y="528" width="1" height="1" fill="#4c4c4c"/><rect x="609" y="499" width="1" height="1" fill="#4c4c4c"/><rect x="609" y="471" width="1" height="1" fill="#4c4c4c"/><rect x="609" y="442" width="1" height="1" fill="#4c4c4c"/><rect x="609" y="414" width="1" height="1" fill="#4c4c4c"/><rect x="609" y="385" width="1" height="1" fill="#4c4c4c"/><rect x="609" y="356" width="1" height="1" fill="#4c4c4c"/><rect x="609" y="328" width="1" height="1" fill="#4c4c4c"/><rect x="609" y="299" width="1" height="1" fill="#4c4c4c"/><rect x="609" y="271" width="1" height="1" fill="#4c4c4c"/><rect x="609" y="242" width="1" height="1" fill="#4c4c4c"/><rect x="609" y="214" width="1" height="1" fill="#4c4c4c"/><rect x="609" y="185" width="1" height="1" fill="#4c4c4c"/><rect x="609" y="157" width="1" height="1" fill="#4c4c4c"/><rect x="609" y="128" width="1" height="1" fill="#4c4c4c"/><rect x="609" y="99" width="1" height="1" fill="#4c4c4c"/><rect x="609" y="71" width="1" height="1" fill="#4c4c4c"/><rect x="609" y="42" width="1" height="1" fill="#4c4c4c"/><rect x="609" y="14" width="1" height="1" fill="#4c4c4c"/><rect x="638" y="556" width="1" height="1" fill="#4c4c4c"/><rect x="638" y="528" width="1" height="1" fill="#4c4c4c"/><rect x="638" y="499" width="1" height="1" fill="#4c4c4c"/><rect x="638" y="471" width="1" height="1" fill="#4c4c4c"/><rect x="638" y="442" width="1" height="1" fill="#4c4c4c"/><rect x="638" y="414" width="1" height="1" fill="#4c4c4c"/><rect x="638" y="385" width="1" height="1" fill="#4c4c4c"/><rect x="638" y="356" width="1" height="1" fill="#4c4c4c"/><rect x="638" y="328" width="1" height="1" fill="#4c4c4c"/><rect x="638" y="299" width="1" height="1" fill="#4c4c4c"/><rect x="638" y="271" width="1" height="1" fill="#4c4c4c"/><rect x="638" y="242" width="1" height="1" fill="#4c4c4c"/><rect x="638" y="214" width="1" height="1" fill="#4c4c4c"/><rect x="638" y="185" width="1" height="1" fill="#4c4c4c"/><rect x="638" y="157" width="1" height="1" fill="#4c4c4c"/><rect x="638" y="128" width="1" height="1" fill="#4c4c4c"/><rect x="638" y="99" width="1" height="1" fill="#4c4c4c"/><rect x="638" y="71" width="1" height="1" fill="#4c4c4c"/><rect x="638" y="42" width="1" height="1" fill="#4c4c4c"/><rect x="638" y="14" width="1" height="1" fill="#4c4c4c"/><rect x="666" y="556" width="1" height="1" fill="#4c4c4c"/><rect x="666" y="528" width="1" height="1" fill="#4c4c4c"/><rect x="666" y="499" width="1" height="1" fill="#4c4c4c"/><rect x="666" y="471" width="1" height="1" fill="#4c4c4c"/><rect x="666" y="442" width="1" height="1" fill="#4c4c4c"/><rect x="666" y="414" width="1" height="1" fill="#4c4c4c"/><rect x="666" y="385" width="1" height="1" fill="#4c4c4c"/><rect x="666" y="356" width="1" height="1" fill="#4c4c4c"/><rect x="666" y="328" width="1" height="1" fill="#4c4c4c"/><rect x="666" y="299" width="1" height="1" fill="#4c4c4c"/><rect x="666" y="271" width="1" height="1" fill="#4c4c4c"/><rect x="666" y="242" width="1" height="1" fill="#4c4c4c"/><rect x="666" y="214" width="1" height="1" fill="#4c4c4c"/><rect x="666" y="185" width="1" height="1" fill="#4c4c4c"/><rect x="666" y="157" width="1" height="1" fill="#4c4c4c"/><rect x="666" y="128" width="1" height="1" fill="#4c4c4c"/><rect x="666" y="99" width="1" height="1" fill="#4c4c4c"/><rect x="666" y="71" width="1" height="1" fill="#4c4c4c"/><rect x="666" y="42" width="1" height="1" fill="#4c4c4c"/><rect x="666" y="14" width="1" height="1" fill="#4c4c4c"/><rect x="695" y="556" width="1" height="1" fill="#4c4c4c"/><rect x="695" y="528" width="1" height="1" fill="#4c4c4c"/><rect x="695" y="499" width="1" height="1" fill="#4c4c4c"/><rect x="695" y="471" width="1" height="1" fill="#4c4c4c"/><rect x="695" y="442" width="1" height="1" fill="#4c4c4c"/><rect x="695" y="414" width="1" height="1" fill="#4c4c4c"/><rect x="695" y="385" width="1" height="1" fill="#4c4c4c"/><rect x="695" y="356" width="1" height="1" fill="#4c4c4c"/><rect x="695" y="328" width="1" height="1" fill="#4c4c4c"/><rect x="695" y="299" width="1" height="1" fill="#4c4c4c"/><rect x="695" y="271" width="1" height="1" fill="#4c4c4c"/><rect x="695" y="242" width="1" height="1" fill="#4c4c4c"/><rect x="695" y="214" width="1" height="1" fill="#4c4c4c"/><rect x="695" y="185" width="1" height="1" fill="#4c4c4c"/><rect x="695" y="157" width="1" height="1" fill="#4c4c4c"/><rect x="695" y="128" width="1" height="1" fill="#4c4c4c"/><rect x="695" y="99" width="1" height="1" fill="#4c4c4c"/><rect x="695" y="71" width="1" height="1" fill="#4c4c4c"/><rect x="695" y="42" width="1" height="1" fill="#4c4c4c"/><rect x="695" y="14" width="1" height="1" fill="#4c4c4c"/><rect x="723" y="556" width="1" height="1" fill="#4c4c4c"/><rect x="723" y="528" width="1" height="1" fill="#4c4c4c"/><rect x="723" y="499" width="1" height="1" fill="#4c4c4c"/><rect x="723" y="471" width="1" height="1" fill="#4c4c4c"/><rect x="723" y="442" width="1" height="1" fill="#4c4c4c"/><rect x="723" y="414" width="1" height="1" fill="#4c4c4c"/><rect x="723" y="385" width="1" height="1" fill="#4c4c4c"/><rect x="723" y="356" width="1" height="1" fill="#4c4c4c"/><rect x="723" y="328" width="1" height="1" fill="#4c4c4c"/><rect x="723" y="299" width="1" height="1" fill="#4c4c4c"/><rect x="723" y="271" width="1" height="1" fill="#4c4c4c"/><rect x="723" y="242" width="1" height="1" fill="#4c4c4c"/><rect x="723" y="214" width="1" height="1" fill="#4c4c4c"/><rect x="723" y="185" width="1" height="1" fill="#4c4c4c"/><rect x="723" y="157" width="1" height="1" fill="#4c4c4c"/><rect x="723" y="128" width="1" height="1" fill="#4c4c4c"/><rect x="723" y="99" width="1" height="1" fill="#4c4c4c"/><rect x="723" y="71" width="1" height="1" fill="#4c4c4c"/><rect x="723" y="42" width="1" height="1" fill="#4c4c4c"/><rect x="723" y="14" width="1" height="1" fill="#4c4c4c"/><rect x="752" y="556" width="1" height="1" fill="#4c4c4c"/><rect x="752" y="528" width="1" height="1" fill="#4c4c4c"/><rect x="752" y="499" width="1" height="1" fill="#4c4c4c"/><rect x="752" y="471" width="1" height="1" fill="#4c4c4c"/><rect x="752" y="442" width="1" height="1" fill="#4c4c4c"/><rect x="752" y="414" width="1" height="1" fill="#4c4c4c"/><rect x="752" y="385" width="1" height="1" fill="#4c4c4c"/><rect x="752" y="356" width="1" height="1" fill="#4c4c4c"/><rect x="752" y="328" width="1" height="1" fill="#4c4c4c"/><rect x="752" y="299" width="1" height="1" fill="#4c4c4c"/><rect x="752" y="271" width="1" height="1" fill="#4c4c4c"/><rect x="752" y="242" width="1" height="1" fill="#4c4c4c"/><rect x="752" y="214" width="1" height="1" fill="#4c4c4c"/><rect x="752" y="185" width="1" height="1" fill="#4c4c4c"/><rect x="752" y="157" width="1" height="1" fill="#4c4c4c"/><rect x="752" y="128" width="1" height="1" fill="#4c4c4c"/><rect x="752" y="99" width="1" height="1" fill="#4c4c4c"/><rect x="752" y="71" width="1" height="1" fill="#4c4c4c"/><rect x="752" y="42" width="1" height="1" fill="#4c4c4c"/><rect x="752" y="14" width="1" height="1" fill="#4c4c4c"/><rect x="780" y="556" width="1" height="1" fill="#4c4c4c"/><rect x="780" y="528" width="1" height="1" fill="#4c4c4c"/><rect x="780" y="499" width="1" height="1" fill="#4c4c4c"/><rect x="780" y="471" width="1" height="1" fill="#4c4c4c"/><rect x="780" y="442" width="1" height="1" fill="#4c4c4c"/><rect x="780" y="414" width="1" height="1" fill="#4c4c4c"/><rect x="780" y="385" width="1" height="1" fill="#4c4c4c"/><rect x="780" y="356" width="1" height="1" fill="#4c4c4c"/><rect x="780" y="328" width="1" height="1" fill="#4c4c4c"/><rect x="780" y="299" width="1" height="1" fill="#4c4c4c"/><rect x="780" y="271" width="1" height="1" fill="#4c4c4c"/><rect x="780" y="242" width="1" height="1" fill="#4c4c4c"/><rect x="780" y="214" width="1" height="1" fill="#4c4c4c"/><rect x="780" y="185" width="1" height="1" fill="#4c4c4c"/><rect x="780" y="157" width="1" height="1" fill="#4c4c4c"/><rect x="780" y="128" width="1" height="1" fill="#4c4c4c"/><rect x="780" y="99" width="1" height="1" fill="#4c4c4c"/><rect x="780" y="71" width="1" height="1" fill="#4c4c4c"/><rect x="780" y="42" width="1" height="1" fill="#4c4c4c"/><rect x="780" y="14" width="1" height="1" fill="#4c4c4c"/><rect x="809" y="556" width="1" height="1" fill="#4c4c4c"/><rect x="809" y="528" width="1" height="1" fill="#4c4c4c"/><rect x="809" y="499" width="1" height="1" fill="#4c4c4c"/><rect x="809" y="471" width="1" height="1" fill="#4c4c4c"/><rect x="809" y="442" width="1" height="1" fill="#4c4c4c"/><rect x="809" y="414" width="1" height="1" fill="#4c4c4c"/><rect x="809" y="385" width="1" height="1" fill="#4c4c4c"/><rect x="809" y="356" width="1" height="1" fill="#4c4c4c"/><rect x="809" y="328" width="1" height="1" fill="#4c4c4c"/><rect x="809" y="299" width="1" height="1" fill="#4c4c4c"/><rect x="809" y="271" width="1" height="1" fill="#4c4c4c"/><rect x="809" y="242" width="1" height="1" fill="#4c4c4c"/><rect x="809" y="214" width="1" height="1" fill="#4c4c4c"/><rect x="809" y="185" width="1" height="1" fill="#4c4c4c"/><rect x="809" y="157" width="1" height="1" fill="#4c4c4c"/><rect x="809" y="128" width="1" height="1" fill="#4c4c4c"/><rect x="809" y="99" width="1" height="1" fill="#4c4c4c"/><rect x="809" y="71" width="1" height="1" fill="#4c4c4c"/><rect x="809" y="42" width="1" height="1" fill="#4c4c4c"/><rect x="809" y="14" width="1" height="1" fill="#4c4c4c"/><rect x="838" y="556" width="1" height="1" fill="#4c4c4c"/><rect x="838" y="528" width="1" height="1" fill="#4c4c4c"/><rect x="838" y="499" width="1" height="1" fill="#4c4c4c"/><rect x="838" y="471" width="1" height="1" fill="#4c4c4c"/><rect x="838" y="442" width="1" height="1" fill="#4c4c4c"/><rect x="838" y="414" width="1" height="1" fill="#4c4c4c"/><rect x="838" y="385" width="1" height="1" fill="#4c4c4c"/><rect x="838" y="356" width="1" height="1" fill="#4c4c4c"/><rect x="838" y="328" width="1" height="1" fill="#4c4c4c"/><rect x="838" y="299" width="1" height="1" fill="#4c4c4c"/><rect x="838" y="271" width="1" height="1" fill="#4c4c4c"/><rect x="838" y="242" width="1" height="1" fill="#4c4c4c"/><rect x="838" y="214" width="1" height="1" fill="#4c4c4c"/><rect x="838" y="185" width="1" height="1" fill="#4c4c4c"/><rect x="838" y="157" width="1" height="1" fill="#4c4c4c"/><rect x="838" y="128" width="1" height="1" fill="#4c4c4c"/><rect x="838" y="99" width="1" height="1" fill="#4c4c4c"/><rect x="838" y="71" width="1" height="1" fill="#4c4c4c"/><rect x="838" y="42" width="1" height="1" fill="#4c4c4c"/><rect x="838" y="14" width="1" height="1" fill="#4c4c4c"/><rect x="866" y="556" width="1" height="1" fill="#4c4c4c"/><rect x="866" y="528" width="1" height="1" fill="#4c4c4c"/><rect x="866" y="499" width="1" height="1" fill="#4c4c4c"/><rect x="866" y="471" width="1" height="1" fill="#4c4c4c"/><rect x="866" y="442" width="1" height="1" fill="#4c4c4c"/><rect x="866" y="414" width="1" height="1" fill="#4c4c4c"/><rect x="866" y="385" width="1" height="1" fill="#4c4c4c"/><rect x="866" y="356" width="1" height="1" fill="#4c4c4c"/><rect x="866" y="328" width="1" height="1" fill="#4c4c4c"/><rect x="866" y="299" width="1" height="1" fill="#4c4c4c"/><rect x="866" y="271" width="1" height="1" fill="#4c4c4c"/><rect x="866" y="242" width="1" height="1" fill="#4c4c4c"/><rect x="866" y="214" width="1" height="1" fill="#4c4c4c"/><rect x="866" y="185" width="1" height="1" fill="#4c4c4c"/><rect x="866" y="157" width="1" height="1" fill="#4c4c4c"/><rect x="866" y="128" width="1" height="1" fill="#4c4c4c"/><rect x="866" y="99" width="1" height="1" fill="#4c4c4c"/><rect x="866" y="71" width="1" height="1" fill="#4c4c4c"/><rect x="866" y="42" width="1" height="1" fill="#4c4c4c"/><rect x="866" y="14" width="1" height="1" fill="#4c4c4c"/><rect x="895" y="556" width="1" height="1" fill="#4c4c4c"/><rect x="895" y="528" width="1" height="1" fill="#4c4c4c"/><rect x="895" y="499" width="1" height="1" fill="#4c4c4c"/><rect x="895" y="471" width="1" height="1" fill="#4c4c4c"/><rect x="895" y="442" width="1" height="1" fill="#4c4c4c"/><rect x="895" y="414" width="1" height="1" fill="#4c4c4c"/><rect x="895" y="385" width="1" height="1" fill="#4c4c4c"/><rect x="895" y="356" width="1" height="1" fill="#4c4c4c"/><rect x="895" y="328" width="1" height="1" fill="#4c4c4c"/><rect x="895" y="299" width="1" height="1" fill="#4c4c4c"/><rect x="895" y="271" width="1" height="1" fill="#4c4c4c"/><rect x="895" y="242" width="1" height="1" fill="#4c4c4c"/><rect x="895" y="214" width="1" height="1" fill="#4c4c4c"/><rect x="895" y="185" width="1" height="1" fill="#4c4c4c"/><rect x="895" y="157" width="1" height="1" fill="#4c4c4c"/><rect x="895" y="128" width="1" height="1" fill="#4c4c4c"/><rect x="895" y="99" width="1" height="1" fill="#4c4c4c"/><rect x="895" y="71" width="1" height="1" fill="#4c4c4c"/><rect x="895" y="42" width="1" height="1" fill="#4c4c4c"/><rect x="895" y="14" width="1" height="1" fill="#4c4c4c"/><rect x="923" y="556" width="1" height="1" fill="#4c4c4c"/><rect x="923" y="528" width="1" height="1" fill="#4c4c4c"/><rect x="923" y="499" width="1" height="1" fill="#4c4c4c"/><rect x="923" y="471" width="1" height="1" fill="#4c4c4c"/><rect x="923" y="442" width="1" height="1" fill="#4c4c4c"/><rect x="923" y="414" width="1" height="1" fill="#4c4c4c"/><rect x="923" y="385" width="1" height="1" fill="#4c4c4c"/><rect x="923" y="356" width="1" height="1" fill="#4c4c4c"/><rect x="923" y="328" width="1" height="1" fill="#4c4c4c"/><rect x="923" y="299" width="1" height="1" fill="#4c4c4c"/><rect x="923" y="271" width="1" height="1" fill="#4c4c4c"/><rect x="923" y="242" width="1" height="1" fill="#4c4c4c"/><rect x="923" y="214" width="1" height="1" fill="#4c4c4c"/><rect x="923" y="185" width="1" height="1" fill="#4c4c4c"/><rect x="923" y="157" width="1" height="1" fill="#4c4c4c"/><rect x="923" y="128" width="1" height="1" fill="#4c4c4c"/><rect x="923" y="99" width="1" height="1" fill="#4c4c4c"/><rect x="923" y="71" width="1" height="1" fill="#4c4c4c"/><rect x="923" y="42" width="1" height="1" fill="#4c4c4c"/><rect x="923" y="14" width="1" height="1" fill="#4c4c4c"/><rect x="952" y="556" width="1" height="1" fill="#4c4c4c"/><rect x="952" y="528" width="1" height="1" fill="#4c4c4c"/><rect x="952" y="499" width="1" height="1" fill="#4c4c4c"/><rect x="952" y="471" width="1" height="1" fill="#4c4c4c"/><rect x="952" y="442" width="1" height="1" fill="#4c4c4c"/><rect x="952" y="414" width="1" height="1" fill="#4c4c4c"/><rect x="952" y="385" width="1" height="1" fill="#4c4c4c"/><rect x="952" y="356" width="1" height="1" fill="#4c4c4c"/><rect x="952" y="328" width="1" height="1" fill="#4c4c4c"/><rect x="952" y="299" width="1" height="1" fill="#4c4c4c"/><rect x="952" y="271" width="1" height="1" fill="#4c4c4c"/><rect x="952" y="242" width="1" height="1" fill="#4c4c4c"/><rect x="952" y="214" width="1" height="1" fill="#4c4c4c"/><rect x="952" y="185" width="1" height="1" fill="#4c4c4c"/><rect x="952" y="157" width="1" height="1" fill="#4c4c4c"/><rect x="952" y="128" width="1" height="1" fill="#4c4c4c"/><rect x="952" y="99" width="1" height="1" fill="#4c4c4c"/><rect x="952" y="71" width="1" height="1" fill="#4c4c4c"/><rect x="952" y="42" width="1" height="1" fill="#4c4c4c"/><rect x="952" y="14" width="1" height="1" fill="#4c4c4c"/><rect x="980" y="556" width="1" height="1" fill="#4c4c4c"/><rect x="980" y="528" width="1" height="1" fill="#4c4c4c"/><rect x="980" y="499" width="1" height="1" fill="#4c4c4c"/><rect x="980" y="471" width="1" height="1" fill="#4c4c4c"/><rect x="980" y="442" width="1" height="1" fill="#4c4c4c"/><rect x="980" y="414" width="1" height="1" fill="#4c4c4c"/><rect x="980" y="385" width="1" height="1" fill="#4c4c4c"/><rect x="980" y="356" width="1" height="1" fill="#4c4c4c"/><rect x="980" y="328" width="1" height="1" fill="#4c4c4c"/><rect x="980" y="299" width="1" height="1" fill="#4c4c4c"/><rect x="980" y="271" width="1" height="1" fill="#4c4c4c"/><rect x="980" y="242" width="1" height="1" fill="#4c4c4c"/><rect x="980" y="214" width="1" height="1" fill="#4c4c4c"/><rect x="980" y="185" width="1" height="1" fill="#4c4c4c"/><rect x="980" y="157" width="1" height="1" fill="#4c4c4c"/><rect x="980" y="128" width="1" height="1" fill="#4c4c4c"/><rect x="980" y="99" width="1" height="1" fill="#4c4c4c"/><rect x="980" y="71" width="1" height="1" fill="#4c4c4c"/><rect x="980" y="42" width="1" height="1" fill="#4c4c4c"/><rect x="980" y="14" width="1" height="1" fill="#4c4c4c"/><rect x="1009" y="556" width="1" height="1" fill="#4c4c4c"/><rect x="1009" y="528" width="1" height="1" fill="#4c4c4c"/><rect x="1009" y="499" width="1" height="1" fill="#4c4c4c"/><rect x="1009" y="471" width="1" height="1" fill="#4c4c4c"/><rect x="1009" y="442" width="1" height="1" fill="#4c4c4c"/><rect x="1009" y="414" width="1" height="1" fill="#4c4c4c"/><rect x="1009" y="385" width="1" height="1" fill="#4c4c4c"/><rect x="1009" y="356" width="1" height="1" fill="#4c4c4c"/><rect x="1009" y="328" width="1" height="1" fill="#4c4c4c"/><rect x="1009" y="299" width="1" height="1" fill="#4c4c4c"/><rect x="1009" y="271" width="1" height="1" fill="#4c4c4c"/><rect x="1009" y="242" width="1" height="1" fill="#4c4c4c"/><rect x="1009" y="214" width="1" height="1" fill="#4c4c4c"/><rect x="1009" y="185" width="1" height="1" fill="#4c4c4c"/><rect x="1009" y="157" width="1" height="1" fill="#4c4c4c"/><rect x="1009" y="128" width="1" height="1" fill="#4c4c4c"/><rect x="1009" y="99" width="1" height="1" fill="#4c4c4c"/><rect x="1009" y="71" width="1" height="1" fill="#4c4c4c"/><rect x="1009" y="42" width="1" height="1" fill="#4c4c4c"/><rect x="1009" y="14" width="1" height="1" fill="#4c4c4c"/><rect x="1038" y="556" width="1" height="1" fill="#4c4c4c"/><rect x="1038" y="528" width="1" height="1" fill="#4c4c4c"/><rect x="1038" y="499" width="1" height="1" fill="#4c4c4c"/><rect x="1038" y="471" width="1" height="1" fill="#4c4c4c"/><rect x="1038" y="442" width="1" height="1" fill="#4c4c4c"/><rect x="1038" y="414" width="1" height="1" fill="#4c4c4c"/><rect x="1038" y="385" width="1" height="1" fill="#4c4c4c"/><rect x="1038" y="356" width="1" height="1" fill="#4c4c4c"/><rect x="1038" y="328" width="1" height="1" fill="#4c4c4c"/><rect x="1038" y="299" width="1" height="1" fill="#4c4c4c"/><rect x="1038" y="271" width="1" height="1" fill="#4c4c4c"/><rect x="1038" y="242" width="1" height="1" fill="#4c4c4c"/><rect x="1038" y="214" width="1" height="1" fill="#4c4c4c"/><rect x="1038" y="185" width="1" height="1" fill="#4c4c4c"/><rect x="1038" y="157" width="1" height="1" fill="#4c4c4c"/><rect x="1038" y="128" width="1" height="1" fill="#4c4c4c"/><rect x="1038" y="99" width="1" height="1" fill="#4c4c4c"/><rect x="1038" y="71" width="1" height="1" fill="#4c4c4c"/><rect x="1038" y="42" width="1" height="1" fill="#4c4c4c"/><rect x="1038" y="14" width="1" height="1" fill="#4c4c4c"/></svg>
<svg class="a" style="left:0;top:0;overflow:visible" width="1139" height="732">
<defs><clipPath id="mapclip"><rect x="332" y="268" width="807" height="351"/></clipPath></defs>
<g clip-path="url(#mapclip)" fill="none" stroke-linejoin="round">
<path d="M360.4 270.1 L358.3 286.1 M332.1 290.4 L342.8 291.5 L349.7 291.5 L350.8 285.6 L358.3 286.1 L369.5 287.7 L370 288.8 M332.1 300.5 L338.5 302 L337.5 306.8 M332.1 307.5 L388.7 313.3 L421.2 316.5 M346.5 299.5 L346 309.1 M346.5 299.5 L432.4 308.5 Q438 310 440.9 315.5 M421.2 316.5 Q414 334 411 350 M332.1 379.5 L380.7 385.3 L384.4 354.4 L407.3 357.1 M398.3 346.4 L410.5 350.7 L392.9 397.6 M383.3 385.9 L395.1 389.6 M390.8 368.8 L401.5 372.5 M398.3 346.4 L383.3 385.9 M412.7 340 L409.5 355.5 M409.5 355.5 L416.4 360.8 M436.7 345.9 L450 340 M348.7 407.2 L392.9 411.5 M348.7 407.2 L347.1 420 L345.5 439.2 L376.9 442.4 L379.6 420 L379.1 416.3 L348.7 413.6 M354.5 440.8 L353.5 447.2 L368.4 448.8 L368.4 441.9 M376.9 442.4 L376.4 451.5 L397.2 453.6 M450 353.3 L447.9 353.3 L445.7 364.5 L444.1 364.5 L442.5 379.5 L450 380.5 M433.5 377.3 L430.3 418.4 L450 421 M424.9 392.3 L421.7 416.3 L430.3 418.4 M424.9 392.3 L431.3 393.3 M411 423.2 L450 428.5 M405.2 462.1 L421.2 462.7 L421.2 465.9 L441.5 468 L486.2 469.6 L488.6 483.8 M405.2 462.1 L404.1 491.5 L440.4 493.6 L441.5 468 M412.1 423.2 L450 427.5 M411.1 429.1 L450 433.3 M446.8 420 L446.8 426.4 M332.1 487.2 L385.5 496.3 M404.7 494.7 Q414 504 424.9 509.6 M406.8 500 L424.9 507.5 L432.4 511.2 L440.9 509.6 L443.1 504.3 L426 503.2 L424.9 507.5 M443.1 506.4 L450 502.1 M389.7 510.1 L417.5 520.3 L432.4 530.9 L439.9 542.7 L450 555.5 M378 618.7 L380 603.3 L411.3 572 L447.3 568 L455.3 561.3 M411.3 572 L408 592 M408.7 590 L444 595.7 L442 618.7 M412 592.7 L439.3 598 L436 616.7 L446 618.7 M406.7 618.7 L408.7 612 L425.3 615.3 L425.3 618.7 M444.3 618.5 L449.6 596.1 L459.7 581.7 L469.3 582.3 M440 594 L444.3 595.1 M440 569.5 L447.5 568.4 L453.9 562 M491.2 586.5 L498.1 578.5 L565.3 582.3 M521.1 531.1 L557.3 534.8 L558.9 530 M521.1 535.9 L534.9 536.9 L534.4 546.5 L519.5 544.4 L521.1 535.9 M485 279.5 L497.5 280.7 L492.1 314.5 M484.4 287.8 L494.5 289.6 M482.1 305 L492.1 306.8 M496.3 270.1 L502.8 270.7 M511.1 270.1 L510.5 273 L565.6 280.7 M509.9 280.7 L565.6 287.3 M509.9 280.7 L506.9 301.5 L565.6 308.6 M504.6 306.8 L565.6 313.9 M504.6 306.8 L502.8 319.2 M473.2 320.4 L471.4 334.1 L565.6 344.7 M467.8 333.5 L557.9 347.7 L557.3 354.8 L565.6 355.4 M467.8 333.5 L465.5 354.8 M536 327.5 L534.2 341.8 M536 327.5 L565.6 329.9 M461.9 337.6 L460.1 354.8 M461.6 340 L466 341 M461.3 343 L465.7 344 M461 346 L465.4 347 M460.7 349 L465.1 350 M460.4 352 L464.8 353 M466.1 337.6 L464.9 354.8 M440 344.1 L449.5 340.6 L453 335.2 L461.9 336.4 M447.7 353.6 L485.6 358.3 M447.7 353.6 L445.9 364.2 L444.1 364.2 L442.4 379 L482.1 383.8 L485.6 357.7 M440 378.4 L565.6 393.8 M517.6 361.3 L554.9 365.4 L551.4 392.1 M517.6 361.3 L515.8 371.9 L513.5 372.5 L511.7 386.7 M476.1 384.4 L472.6 421.7 M440 419.3 L451.8 420.5 L453 419.3 L472 421.1 M440 426.4 L475.5 430.6 M446.5 420.5 L445.9 426.4 M475.5 388.5 L491.5 390.9 L490.4 399.2 L484.4 398.6 L480.9 431.2 M475.5 394.4 L480.9 395 L476.7 431.2 M480.9 431.2 L545.5 438.9 M502.8 386.7 L499.2 414 L501 414.6 L499.8 425.8 L541.3 429.4 L545.5 392.7 M495.1 400.4 L491.5 424 L499.8 425.8 M495.1 400.4 L500.4 401 M515.8 428.8 L515.2 434.1 L539.5 437.1 M546 397.4 L560.9 398.6 L560.3 406.9 L554.3 406.3 L550.8 438.9 M545.5 402.1 L550.8 403.3 L546 438.3 M550.8 438.9 L565.6 441.2 M564.4 408.1 L562 431.8 L565.6 432.9 M440 431.8 L565.6 447.2 M440 467.8 L486.2 469.6 M441.2 468.4 L440.6 493.3 M442.4 507.5 Q446 502 455.4 498.1 L565.6 472 M440 502.8 L443.6 505.8 L441.2 509.9 M543.7 492.1 L549 508.1 M524.1 505.2 L521.2 531.2 L557.3 535.4 L559.1 522.9 L565.6 524.1 M524.1 505.2 L565.6 509.9 M552.6 503.4 L560.9 505.2 L559.7 509.9 L552 508.1 L552.6 503.4 M559.1 527.7 L565.6 528.3 M520.6 540 L521.2 534.8 L535.4 536.6 L535.4 540 M570.8 607.6 L572 617.2 L582.8 618.4 L584 607.6 M588.8 607.6 L590 617.2 L608 618.4 M666.8 607.6 L665.6 618.4 M671.6 607.6 L670.4 618.4 M695.6 607.6 L701.6 614.8 L707.6 607.6 M728 608.8 L724.4 618.4 M731.6 608.8 L726.8 618.4 M760.4 607.6 L759.2 618.4 M778.4 607.6 L777.2 618.4 M884 617.2 L898.4 618.4" stroke="#d0d0d0" stroke-width="0.9"/>
<path d="M372.1 270.1 L369.5 294.1 L448.9 301.8 M467.3 269.5 L449.5 301.5 L440 318 L422.8 350 M449.5 323 L434.5 350 M428.1 340 L418.5 357.1 L412.1 370.9 L406.8 388 L402.5 412.5 L400.4 430 L397.2 454.1 L394 490.4 L389.7 495.7 L385.5 496.8 M439.9 340 L430.3 357.1 L421.7 373.1 L415.3 391.2 L412.1 409.3 L410 430.7 L404.7 464.8 L404.1 492.5 L407.9 498.4 L450 494.7 M440 339.4 L453 318.1 L457.8 315.1 L494.5 318.1 L565.6 326.4 M485.6 269.5 L479.7 315.7 M333.2 390.7 L392.9 398.1 L404.7 399.2 L402.5 412.5 L392.4 411.5 L392.9 398.1 M410 430.7 L450 435.5 M332.1 489.3 L385.5 496.8 L407.9 498.4 M332.1 499.5 L389.7 510.1 L411.1 518.1 L436.7 540.5 L450 555.5 M419.6 498.4 L431.3 510 M399.9 514.9 L401.5 590 L402 618.7 M420.7 500 L450 530.9 M440 434.1 L565.6 448.3 M440 498.1 L565.6 466.1 M565.6 486.8 L476.7 507.5 Q462 512 459.5 517 L454.8 530 L456 539.5 M440 520.6 L456.6 539.5 M449.6 530 L456 536.4 L461.3 546 L476.3 567.9 L492.3 591.3 L511.5 618.5 M440 543.9 L456 564.1 L494.4 618.5 M476.3 567.9 L565.3 573.7 M691.5 607.6 L690.3 618.4 M784.4 607.6 L782.7 618.4 M870.8 607.6 L869.1 618.4" stroke="#12c4d4" stroke-width="1"/>
</g>
<g><text x="398.8" y="408.6" text-anchor="middle" font-family="Liberation Sans" font-size="8.5" fill="#c41a1a">1530</text><rect x="395.6" y="402.40000000000003" width="6.4" height="6.4" fill="#0000d8" stroke="#6a6aa0" stroke-width="0.5"/></g>
<g><text x="358.8" y="465.1" text-anchor="middle" font-family="Liberation Sans" font-size="8.5" fill="#c41a1a">2516</text><rect x="355.6" y="458.90000000000003" width="6.4" height="6.4" fill="#0000d8" stroke="#6a6aa0" stroke-width="0.5"/></g>
<g><text x="457.2" y="458.4" text-anchor="middle" font-family="Liberation Sans" font-size="8.5" fill="#c41a1a">1519</text><rect x="454.0" y="452.2" width="6.4" height="6.4" fill="#0000d8" stroke="#6a6aa0" stroke-width="0.5"/></g>
<g><text x="497.6" y="544.2" text-anchor="middle" font-family="Liberation Sans" font-size="8.5" fill="#c41a1a">1733</text><rect x="494.40000000000003" y="538.0" width="6.4" height="6.4" fill="#0000d8" stroke="#6a6aa0" stroke-width="0.5"/></g>
<g><text x="473.1" y="617.3" text-anchor="middle" font-family="Liberation Sans" font-size="8.5" fill="#c41a1a">1833</text><rect x="469.90000000000003" y="611.0999999999999" width="6.4" height="6.4" fill="#0000d8" stroke="#6a6aa0" stroke-width="0.5"/></g>
<g><text x="556.8" y="608.7" text-anchor="middle" font-family="Liberation Sans" font-size="8.5" fill="#c41a1a">595</text><rect x="553.5999999999999" y="602.5" width="6.4" height="6.4" fill="#0000d8" stroke="#6a6aa0" stroke-width="0.5"/></g>
<g transform="rotate(-90 404.1 442.4)"><text x="404.1" y="445.4" text-anchor="middle" font-family="Liberation Sans" font-size="8.5" fill="#c41a1a">9037</text><rect x="400.90000000000003" y="439.2" width="6.4" height="6.4" fill="#0000d8" stroke="#6a6aa0" stroke-width="0.5"/></g>
<text x="474.4" y="319.8" text-anchor="middle" font-family="Liberation Sans" font-size="8.5" fill="#e27a06">52563284</text>
<text x="404.4" y="516.5" text-anchor="middle" font-family="Liberation Sans" font-size="8.5" fill="#e27a06">52563236</text>
<circle cx="453" cy="313.9" r="1.8" fill="none" stroke="#bbb" stroke-width="0.8"/><circle cx="389.7" cy="507.5" r="1.8" fill="none" stroke="#bbb" stroke-width="0.8"/>
<text transform="translate(434 340) rotate(-57)" text-anchor="middle" font-family="Liberation Sans" font-size="10.5" fill="#b4b4b4" y="3.5">Exercitation</text>
<text transform="translate(492 604) rotate(54)" text-anchor="middle" font-family="Liberation Sans" font-size="10.5" fill="#b4b4b4" y="3.5">Minim Veniam</text>
</svg>
<svg class="a" style="left:0;top:0" width="72" height="520">
<defs><linearGradient id="gTb" x1="0" y1="0" x2="0" y2="1"><stop offset="0" stop-color="#f6f6f6"/><stop offset="0.25" stop-color="#e9e9e9"/><stop offset="0.45" stop-color="#e6e6e6"/><stop offset="1" stop-color="#f7f7f7"/></linearGradient></defs>
<rect x="7" y="131" width="2" height="2" fill="#a0a0a0"/>
<rect x="13" y="131" width="2" height="2" fill="#a0a0a0"/>
<rect x="19" y="131" width="2" height="2" fill="#a0a0a0"/>
<rect x="25" y="131" width="2" height="2" fill="#a0a0a0"/>
<rect x="31" y="131" width="2" height="2" fill="#a0a0a0"/>
<rect x="37" y="131" width="2" height="2" fill="#a0a0a0"/>
<rect x="43" y="131" width="2" height="2" fill="#a0a0a0"/>
<rect x="49" y="131" width="2" height="2" fill="#a0a0a0"/>
<rect x="55" y="131" width="2" height="2" fill="#a0a0a0"/>
<rect x="61" y="131" width="2" height="2" fill="#a0a0a0"/>
<rect x="1.5" y="137.5" width="34" height="34" fill="url(#gTb)" stroke="#8c8c8c" stroke-width="1.2"/>
<path d="M26 167 L31 167 L31 162 Z" fill="#000"/>
<rect x="36.5" y="137.5" width="34" height="34" fill="url(#gTb)" stroke="#8c8c8c" stroke-width="1.2"/>
<path d="M61 167 L66 167 L66 162 Z" fill="#000"/>
<rect x="1.5" y="172.5" width="34" height="34" fill="url(#gTb)" stroke="#8c8c8c" stroke-width="1.2"/>
<path d="M26 202 L31 202 L31 197 Z" fill="#000"/>
<rect x="36.5" y="172.5" width="34" height="34" fill="url(#gTb)" stroke="#8c8c8c" stroke-width="1.2"/>
<path d="M61 202 L66 202 L66 197 Z" fill="#000"/>
<rect x="1.5" y="207.5" width="34" height="34" fill="url(#gTb)" stroke="#8c8c8c" stroke-width="1.2"/>
<path d="M26 237 L31 237 L31 232 Z" fill="#000"/>
<rect x="36.5" y="207.5" width="34" height="34" fill="url(#gTb)" stroke="#8c8c8c" stroke-width="1.2"/>
<path d="M61 237 L66 237 L66 232 Z" fill="#000"/>
<rect x="1.5" y="242.5" width="34" height="34" fill="url(#gTb)" stroke="#8c8c8c" stroke-width="1.2"/>
<path d="M26 272 L31 272 L31 267 Z" fill="#000"/>
<rect x="36.5" y="242.5" width="34" height="34" fill="url(#gTb)" stroke="#8c8c8c" stroke-width="1.2"/>
<path d="M61 272 L66 272 L66 267 Z" fill="#000"/>
<rect x="1.5" y="277.5" width="34" height="34" fill="url(#gTb)" stroke="#8c8c8c" stroke-width="1.2"/>
<path d="M26 307 L31 307 L31 302 Z" fill="#000"/>
<rect x="1.5" y="320.5" width="34" height="34" fill="url(#gTb)" stroke="#8c8c8c" stroke-width="1.2"/>
<rect x="36.5" y="320.5" width="34" height="34" fill="url(#gTb)" stroke="#8c8c8c" stroke-width="1.2"/>
<path d="M61 350 L66 350 L66 345 Z" fill="#000"/>
<rect x="1.5" y="355.5" width="34" height="34" fill="url(#gTb)" stroke="#8c8c8c" stroke-width="1.2"/>
<rect x="1.5" y="398.5" width="34" height="34" fill="url(#gTb)" stroke="#8c8c8c" stroke-width="1.2"/>
<path d="M26 428 L31 428 L31 423 Z" fill="#000"/>
<rect x="36.5" y="398.5" width="34" height="34" fill="url(#gTb)" stroke="#8c8c8c" stroke-width="1.2"/>
<rect x="1.5" y="433.5" width="34" height="34" fill="url(#gTb)" stroke="#8c8c8c" stroke-width="1.2"/>
<rect x="36.5" y="433.5" width="34" height="34" fill="url(#gTb)" stroke="#8c8c8c" stroke-width="1.2"/>
<path d="M61 463 L66 463 L66 458 Z" fill="#000"/>
<rect x="1.5" y="476.5" width="34" height="34" fill="url(#gTb)" stroke="#8c8c8c" stroke-width="1.2"/>
<path d="M26 506 L31 506 L31 501 Z" fill="#000"/>

<g stroke="#111" stroke-width="1.1" fill="none">
<path d="M10 147 L16 147 M13 144 L13 150 M24 155.5 L30 155.5 M27 152.5 L27 158.5 M10.5 161.5 L16.5 161.5 M13.5 158.5 L13.5 164.5"/>
<path d="M41.7 159.8 L65.2 148.7"/>
<path d="M7.8 198 Q9 182 27.5 178.8" stroke-width="1.3"/>
<circle cx="52.2" cy="188.5" r="10.2"/>
<ellipse cx="18" cy="224" rx="13" ry="6" transform="rotate(-40 18 224)"/>
<path d="M42 216 C41 226 46 237 49.5 232 C53 227 57 217 61 214.5 C64 213 66 224 64 226 C62 228 50 219 42 216 Z"/>
<path d="M13.8 254 C7 256 7.5 263 13 263.3 L28 263.3" stroke-width="1.3"/>
<path d="M43.5 247.3 L51.5 247.3 L54.4 253.1 L51.5 259 L43.5 259 L40.5 253.1 Z"/>
<path d="M55.8 260.3 L65.8 260.3 L60.6 251.2 Z"/>
<rect x="41" y="263.6" width="14.6" height="7" rx="1"/>
</g>
<defs><pattern id="hatch" width="3" height="3" patternUnits="userSpaceOnUse" patternTransform="rotate(45)"><rect width="3" height="3" fill="#f2f2f2"/><line x1="0" y1="0" x2="0" y2="3" stroke="#555" stroke-width="1"/></pattern></defs>
<path d="M7.6 293.3 L13.8 287.1 L28.4 287.1 L28.4 301.3 L7.6 301.3 Z" fill="url(#hatch)" stroke="#111" stroke-width="1.1"/>
<circle cx="20.4" cy="294.7" r="2.8" fill="#f2f2f2" stroke="#111" stroke-width="1"/>
<text x="18" y="347" text-anchor="middle" font-family="Liberation Serif" font-size="27" fill="#000">A</text>
<g stroke="#111" stroke-width="1.2" fill="none"><path d="M43.5 329 L43.5 345 M61.5 329 L61.5 345 M44 331.2 L61 331.2"/></g>
<path d="M44 331.2 L47.5 329.2 L47.5 333.2 Z M61 331.2 L57.5 329.2 L57.5 333.2 Z" fill="#111"/>
<rect x="7.5" y="363.5" width="21.5" height="17" fill="#fff" stroke="#111" stroke-width="1.5"/>
<path d="M10 377.5 L10 372 L13 369.5 L16 372.5 L21 368 L26.5 374 L26.5 377.5 Z" fill="#000"/>
<circle cx="24.6" cy="367.3" r="1.6" fill="#000"/>
<path d="M5.2 408.5 L5.2 427.4 L24.2 427.4 Z M9.4 418 L9.4 424 L15.4 424 Z" fill="#fff" stroke="#111" stroke-width="1.1"/>
<path d="M10.5 404.5 L19.5 413" stroke="#d02a1a" stroke-width="3" stroke-linecap="round"/>
<path d="M23.5 420.5 L26 403 L29 420.5" stroke="#111" stroke-width="1.1" fill="none"/>
<circle cx="26" cy="403.5" r="1.2" fill="none" stroke="#111" stroke-width="0.8"/>
<rect x="41.5" y="411.5" width="23" height="7" rx="1.5" fill="#fff" stroke="#222" stroke-width="1"/>
<path d="M44 412 L44 414 M46.5 412 L46.5 413.5 M49 412 L49 414 M51.5 412 L51.5 413.5 M54 412 L54 415 M56.5 412 L56.5 413.5 M59 412 L59 414 M61.5 412 L61.5 413.5" stroke="#444" stroke-width="0.7"/>
<rect x="7.8" y="440.5" width="17" height="12" fill="#fdf0c0" stroke="#222" stroke-width="1.1"/>
<circle cx="22" cy="451.9" r="7.3" fill="#fdf0c0" fill-opacity="0.85" stroke="#222" stroke-width="1.1"/>
<circle cx="7.8" cy="452.6" r="1.4" fill="#ff2020"/>
<path d="M41.5 448.8 L58.6 438.8" stroke="#ff2a2a" stroke-width="1.3"/>
<path d="M51.5 443.5 L51.5 455 L54 452.5 L56 457.5 L58 456.5 L56 451.5 L59 451.5 Z" fill="#fff" stroke="#777" stroke-width="0.9" stroke-linejoin="round"/>
<g stroke="#222" stroke-width="1.1" fill="none" stroke-linejoin="round">
<path d="M7.4 489.6 L19.9 482 L28.4 488.2 L15.9 495.3 Z M7.4 489.6 L7.4 497.4 L15.9 503.8 L28.4 496.3 L28.4 488.2 M15.9 495.3 L15.9 503.8"/>
</g>

</svg>
<svg class="a" style="left:0;top:0" width="1500" height="122">
<defs>
<linearGradient id="gLens" x1="0" y1="0" x2="0" y2="1"><stop offset="0" stop-color="#a9c3e6"/><stop offset="0.45" stop-color="#7fa6dc"/><stop offset="0.5" stop-color="#5f93d8"/><stop offset="1" stop-color="#7db3ee"/></linearGradient>
<linearGradient id="gFloppy" x1="0" y1="0" x2="0" y2="1"><stop offset="0" stop-color="#6f9ff5"/><stop offset="1" stop-color="#3f7ff0"/></linearGradient>
<linearGradient id="gGreen" x1="0" y1="0" x2="1" y2="1"><stop offset="0" stop-color="#8fd16b"/><stop offset="1" stop-color="#2e9a3a"/></linearGradient>
<linearGradient id="gPage" x1="0" y1="0" x2="1" y2="1"><stop offset="0" stop-color="#f4f4f4"/><stop offset="1" stop-color="#e2e2e2"/></linearGradient>
<linearGradient id="gFolder" x1="0" y1="0" x2="0" y2="1"><stop offset="0" stop-color="#8db4e2"/><stop offset="1" stop-color="#4f86cc"/></linearGradient>
<radialGradient id="gGlow"><stop offset="0" stop-color="#ffffe0"/><stop offset="0.25" stop-color="#f4f040"/><stop offset="0.7" stop-color="#eee830" stop-opacity="0.75"/><stop offset="1" stop-color="#eee830" stop-opacity="0"/></radialGradient>
<g id="mag">
 <path d="M8 8 L15.5 15.5" stroke="#5a5a5a" stroke-width="4" stroke-linecap="round"/>
 <circle cx="0" cy="0" r="11" fill="#ecece4" stroke="#b5b5ad" stroke-width="1"/>
 <circle cx="0" cy="0" r="9.3" fill="url(#gLens)" stroke="#6d8fbf" stroke-width="0.6"/>
</g>
</defs>
<!-- handles tb1 -->
<g fill="#969696">
<rect x="7" y="47" width="2" height="2"/>
<rect x="7" y="53" width="2" height="2"/>
<rect x="7" y="59" width="2" height="2"/>
<rect x="7" y="65" width="2" height="2"/>
<rect x="7" y="71" width="2" height="2"/>
<rect x="87" y="47" width="2" height="2"/>
<rect x="87" y="53" width="2" height="2"/>
<rect x="87" y="59" width="2" height="2"/>
<rect x="87" y="65" width="2" height="2"/>
<rect x="87" y="71" width="2" height="2"/>
<rect x="402" y="47" width="2" height="2"/>
<rect x="402" y="53" width="2" height="2"/>
<rect x="402" y="59" width="2" height="2"/>
<rect x="402" y="65" width="2" height="2"/>
<rect x="402" y="71" width="2" height="2"/>
<rect x="707" y="47" width="2" height="2"/>
<rect x="707" y="53" width="2" height="2"/>
<rect x="707" y="59" width="2" height="2"/>
<rect x="707" y="65" width="2" height="2"/>
<rect x="707" y="71" width="2" height="2"/>
<rect x="7" y="92" width="2" height="2"/>
<rect x="7" y="98" width="2" height="2"/>
<rect x="7" y="104" width="2" height="2"/>
<rect x="7" y="110" width="2" height="2"/>
</g>
<!-- dotted separators -->
<g stroke="#5e5e5e" stroke-width="1" stroke-dasharray="1 3">
<line x1="186.5" y1="41" x2="186.5" y2="82"/><line x1="288.5" y1="41" x2="288.5" y2="82"/><line x1="344.5" y1="41" x2="344.5" y2="82"/>
<line x1="501.5" y1="41" x2="501.5" y2="82"/><line x1="557.5" y1="41" x2="557.5" y2="82"/><line x1="853.5" y1="41" x2="853.5" y2="82"/>
<line x1="910.5" y1="41" x2="910.5" y2="82"/><line x1="67.5" y1="86" x2="67.5" y2="120"/>
</g>
<!-- arrow select -->
<path d="M27.5 50.5 L27.5 66 L31 62.5 L34.5 70.5 L37.5 69 L34 61.5 L39 61.5 Z" fill="#fff" stroke="#3a3a3a" stroke-width="1" stroke-linejoin="round"/>
<!-- new doc -->
<rect x="100.5" y="47.5" width="24" height="27" rx="2" fill="url(#gPage)" stroke="#8d8d8d"/>
<rect x="101" y="73" width="23" height="2" fill="#9a9a9a"/>
<circle cx="120.7" cy="52.7" r="7.5" fill="url(#gGlow)"/>
<!-- open folder -->
<path d="M143 49 L150 49 L148 72 L145 72 Z" fill="#8a8a8a"/>
<path d="M150.5 47.5 L171.5 47.5 L170 60 L148.5 62 Z" fill="#fbfbfb" stroke="#8a8a8a"/>
<path d="M152 51 L169 51 M152 53.5 L169 53.5" stroke="#b0b0b0"/>
<path d="M150 58.5 L175.5 58.5 L172 73.5 L146 73.5 Z" fill="url(#gFolder)" stroke="#3c6fb0" stroke-width="0.8"/>
<!-- save -->
<g id="floppy">
<rect x="202.5" y="48.5" width="24" height="25" rx="3" fill="url(#gFloppy)" stroke="#2d2d9e" stroke-width="1.2"/>
<rect x="206" y="49.5" width="17" height="11" fill="#f2f4ff"/>
<rect x="208" y="63" width="12" height="10" fill="#e8e8ee"/>
<rect x="209.5" y="65" width="2" height="5" fill="#1c3ca8"/>
</g>
<!-- save as -->
<use href="#floppy" x="46" y="0"/>
<path d="M257.5 67 L259 61 L272.5 47.5 L275.5 50.5 L262 64 Z" fill="#f5b431" stroke="#9a4a10" stroke-width="0.8"/>
<path d="M271 49 L274 52" stroke="#e04040" stroke-width="2.2"/>
<!-- SVG -->
<g stroke="#111" stroke-width="2.8" stroke-linecap="round">
<path d="M317 61 L317 50.5 M317 61 L311 52.5 M317 61 L323 52.5 M317 61 L307.8 57.5 M317 61 L326.2 57.5"/>
</g>
<g fill="#111"><circle cx="317" cy="50.5" r="2.7"/><circle cx="310.8" cy="52.5" r="2.7"/><circle cx="323.2" cy="52.5" r="2.7"/><circle cx="307.8" cy="57.5" r="2.7"/><circle cx="326.2" cy="57.5" r="2.7"/></g>
<rect x="305" y="59" width="24" height="14.5" rx="3.5" fill="#111"/>
<g stroke="#f7a833" stroke-width="1.5" stroke-linecap="round">
<path d="M317 60 L317 50.5 M317 60 L311 52.5 M317 60 L323 52.5 M317 60 L308.2 57.5 M317 60 L325.8 57.5"/>
</g>
<g fill="#f7a833"><circle cx="317" cy="50.5" r="1.9"/><circle cx="310.9" cy="52.5" r="1.9"/><circle cx="323.1" cy="52.5" r="1.9"/><circle cx="308" cy="57.5" r="1.9"/><circle cx="326" cy="57.5" r="1.9"/></g>
<path d="M308.5 60.3 Q317 58.5 325.5 60.3" stroke="#f7a833" stroke-width="1.4" fill="none"/>
<text x="317" y="71.8" text-anchor="middle" font-family="Liberation Sans" font-weight="bold" font-size="10.5" fill="#fff" transform="translate(317 71.8) scale(0.82 1.12) translate(-317 -71.8)">SVG</text>
<!-- print preview -->
<rect x="362.5" y="47.5" width="20" height="12" rx="1" fill="#eeeeee" stroke="#b8b8b8"/>
<path d="M359.5 59.5 L386.5 59.5 L386.5 71 Q386.5 73.5 384 73.5 L362 73.5 Q359.5 73.5 359.5 71 Z" fill="#e6e6e6" stroke="#a8a8a8"/>
<rect x="360" y="70" width="26" height="3" fill="#c6c6c6"/>
<path d="M372 60 L378 66" stroke="#8a8a8a" stroke-width="3" stroke-linecap="round"/>
<circle cx="368.5" cy="55.5" r="6" fill="#c7dbf2" stroke="#6f95c4" stroke-width="1.5"/>
<!-- undo -->
<path d="M413.5 52 L413.5 66.5 L427 66.5 L422.5 62.2 Q426.5 57.8 431 58 Q436.5 59 436.5 64.5 Q436 70 426.5 73 Q437 74 441 66.5 Q444 58 437.5 51.5 Q431 47 424 49.5 Q419.5 51.5 417.8 55.8 Z" fill="url(#gGreen)" stroke="#1f7a2a" stroke-width="0.8" stroke-linejoin="round"/>
<!-- redo -->
<g opacity="0.5" transform="translate(902 0) scale(-1 1)"><path d="M413.5 52 L413.5 66.5 L427 66.5 L422.5 62.2 Q426.5 57.8 431 58 Q436.5 59 436.5 64.5 Q436 70 426.5 73 Q437 74 441 66.5 Q444 58 437.5 51.5 Q431 47 424 49.5 Q419.5 51.5 417.8 55.8 Z" fill="url(#gGreen)" stroke="#1f7a2a" stroke-width="0.8" stroke-linejoin="round"/></g>
<!-- eraser -->
<ellipse cx="533" cy="72" rx="10" ry="1.3" fill="#dcdcdc"/>
<path d="M518 66 L536.5 47.5 L542.5 53.5 L524 72 Z" fill="#d42020" stroke="#8a1010" stroke-width="0.8"/>
<path d="M521 68.5 L539.5 50" stroke="#fff" stroke-width="2.2"/>
<path d="M518 66 L522.5 61.5 L528.5 67.5 L524 72 Z" fill="#f0f0f0" stroke="#707070" stroke-width="0.8"/>
<!-- scissors -->
<path d="M588 46.5 L587 62 L590 62 L590.5 47 Z" fill="#f4f4f4" stroke="#707070" stroke-width="0.8"/>
<path d="M599.5 52.5 L589 60.5 L590.5 62 L600 55.5 Z" fill="#f4f4f4" stroke="#707070" stroke-width="0.8"/>
<ellipse cx="578.5" cy="62.5" rx="5.6" ry="3.2" transform="rotate(-20 578.5 62.5)" fill="none" stroke="#e02020" stroke-width="2"/>
<ellipse cx="589.5" cy="70.5" rx="3" ry="5" transform="rotate(-10 589.5 70.5)" fill="none" stroke="#e02020" stroke-width="2"/>
<path d="M584 61.5 L588 64" stroke="#e02020" stroke-width="2"/>
<path d="M572.5 73 L578.5 73 M575.5 70 L575.5 76" stroke="#000" stroke-width="1.2"/>
<!-- copy -->
<path d="M617.5 45.5 L637 45.5 L638.5 47 L638.5 69.5 L617.5 69.5 Z" fill="#f4f4f4" stroke="#b0b0b0"/>
<path d="M626.5 51.5 L647 51.5 L647 72 L643 76 L626.5 76 Z" fill="#f7f7f7" stroke="#999"/>
<path d="M630 58 L643 58 M630 60.5 L643 60.5 M630 63 L643 63 M630 66 L643 66 M620 53 L625 53 M620 56 L625 56 M620 59 L625 59 M620 62 L625 62" stroke="#c8c8c8"/>
<path d="M619 72 L625 72 M622 69 L622 75" stroke="#000" stroke-width="1.2"/>
<!-- paste -->
<rect x="664.5" y="48" width="27" height="27" rx="1.5" fill="#c9871f" stroke="#9b6614"/>
<rect x="667.5" y="50" width="21" height="23" fill="#f7f7f7"/>
<path d="M671 55 L685 55 M671 57.5 L685 57.5 M671 60 L685 60 M671 62.5 L685 62.5 M671 65.5 L680 65.5" stroke="#c8c8c8"/>
<path d="M683 73 L688.5 73 L688.5 67.5 Z" fill="#a8a8a8"/>
<path d="M672.5 45.5 L683.5 45.5 L684 48 L686 48 L685.5 52 L670.5 52 L670 48 L672 48 Z" fill="#a4a49c" stroke="#7a7a72" stroke-width="0.6"/>
<!-- pencil red line -->
<path d="M722 71.5 L744 71.5" stroke="#e82020" stroke-width="1.1"/>
<path d="M723.5 70 L725 64.5 L739.5 50 L744 54.5 L729.5 69 Z" fill="#d8321e" stroke="#6a2010" stroke-width="0.8"/>
<path d="M723.5 70 L725 64.5 L729.5 69 Z" fill="#e8c89a"/>
<path d="M736 53.5 L740.5 58" stroke="#d0d0d0" stroke-width="2"/>
<!-- navy box -->
<rect x="765" y="51" width="28" height="21" fill="#00087c" stroke="#111" stroke-width="0.8"/>
<path d="M768.5 68.5 L789.5 54.5 L789.5 68.5 Z" fill="none" stroke="#fff" stroke-width="1.2" stroke-dasharray="3 1.5"/>
<!-- pressed buttons -->
<rect x="804" y="40" width="43" height="43" rx="5" fill="#b9b9b9"/>
<rect x="861" y="40" width="43" height="43" rx="5" fill="#b9b9b9"/>
<circle cx="825" cy="60.7" r="13" fill="none" stroke="#000" stroke-width="1.7"/>
<path d="M811 75 L839 47" stroke="#2020ff" stroke-width="1"/>
<g fill="#000">
<rect x="869" y="48" width="2.2" height="2.2"/><rect x="877" y="48" width="2.2" height="2.2"/><rect x="885" y="48" width="2.2" height="2.2"/><rect x="893" y="48" width="2.2" height="2.2"/>
<rect x="869" y="56" width="2.2" height="2.2"/><rect x="877" y="56" width="2.2" height="2.2"/><rect x="885" y="56" width="2.2" height="2.2"/><rect x="893" y="56" width="2.2" height="2.2"/>
<rect x="869" y="64" width="2.2" height="2.2"/><rect x="877" y="64" width="2.2" height="2.2"/><rect x="885" y="64" width="2.2" height="2.2"/><rect x="893" y="64" width="2.2" height="2.2"/>
<rect x="869" y="72" width="2.2" height="2.2"/><rect x="877" y="72" width="2.2" height="2.2"/><rect x="885" y="72" width="2.2" height="2.2"/><rect x="893" y="72" width="2.2" height="2.2"/>
</g>
<!-- zoom icons -->
<use href="#mag" x="935" y="57"/>
<path d="M929 55.5 L941 55.5 L941 58.5 L929 58.5 Z M933.5 51 L936.5 51 L936.5 63 L933.5 63 Z" fill="#fff" stroke="#2f4f9f" stroke-width="0.6"/>
<use href="#mag" x="981.5" y="57"/>
<rect x="975" y="55.5" width="13" height="3" fill="#fff" stroke="#2f4f9f" stroke-width="0.6"/>
<use href="#mag" x="1027" y="57"/>
<path d="M1021 54 L1021 51 L1024 51 M1030 51 L1033 51 L1033 54 M1033 60 L1033 63 L1030 63 M1024 63 L1021 63 L1021 60" fill="none" stroke="#fff" stroke-width="1.8"/>
<rect x="1024" y="54" width="6" height="6" fill="#a8c4ea"/>
<use href="#mag" x="1074" y="57"/>
<path d="M1068 54 L1068 51 L1071 51 M1077 51 L1080 51 L1080 54 M1080 60 L1080 63 L1077 63 M1071 63 L1068 63 L1068 60" fill="none" stroke="#e00000" stroke-width="2"/>
<rect x="1071" y="54" width="6" height="6" fill="#a8c4ea"/>
<use href="#mag" x="1119.5" y="57"/>
<path d="M1113 57 L1118 52 L1118 55 L1126 55 L1126 59 L1118 59 L1118 62 Z" fill="#fff" stroke="#3a5a9a" stroke-width="0.5"/>
<rect x="1153.5" y="45.5" width="27" height="18" fill="#fff" stroke="#6a8fd0" stroke-width="1"/>
<use href="#mag" x="1167" y="60"/>
<use href="#mag" x="1212" y="57"/>
<path d="M1212 46 L1215.5 50 L1213 50 L1213 56 L1219 56 L1219 53.5 L1223 57 L1219 60.5 L1219 58 L1213 58 L1213 64 L1215.5 64 L1212 68 L1208.5 64 L1211 64 L1211 58 L1205 58 L1205 60.5 L1201 57 L1205 53.5 L1205 56 L1211 56 L1211 50 L1208.5 50 Z" fill="#fff" stroke="#4a7ac8" stroke-width="0.7"/>
<!-- toolbar2 button -->
<rect x="15" y="88" width="43" height="31" rx="5" fill="url(#gBtn2)" stroke="#7e7e7e" stroke-width="1.6"/>
<linearGradient id="gBtn2" x1="0" y1="0" x2="0" y2="1"><stop offset="0" stop-color="#f2f2f2"/><stop offset="0.5" stop-color="#e4e4e4"/><stop offset="1" stop-color="#f4f4f4"/></linearGradient>
<path d="M33.5 93.5 L39 93.5 L39 100.5 L46 100.5 L46 106 L39 106 L39 113 L33.5 113 L33.5 106 L26.5 106 L26.5 100.5 L33.5 100.5 Z" fill="#ee0000" stroke="#222" stroke-width="0.8"/>
</svg>
<svg class="a" style="left:92px;top:124px" width="22" height="20">
<circle cx="10.2" cy="9.7" r="5.5" fill="#eef0f4" stroke="#23408a" stroke-width="2.2"/>
<path d="M8 9.7 L13 9.7 M10.2 7 L10.2 12" stroke="#d88" stroke-width="0.6"/>
<path d="M10.5 10 L15 14.6" stroke="#f0a020" stroke-width="2.4"/>
<circle cx="15.3" cy="15" r="1.3" fill="#e06060"/>
</svg>
<div class="a" style="left:1154px;top:122px;width:301px;height:676px;background:#ececec;border-top:1px solid #c8c8c8"></div>
<div class="a" style="left:1455px;top:122px;width:45px;height:676px;background:linear-gradient(90deg,#e9e9e9 0%,#e4e4e4 60%,#c9c9c9 100%);border-top:1px solid #c8c8c8"></div>
<div class="a" style="left:1155px;top:127px;width:300px;text-align:center;font-size:12px;color:#333;padding-left:37px;line-height:14px">Lista de capas</div>
<div class="dbtn" style="left:1155px;top:145px;width:60px;height:26px"></div>
<div class="dbtn" style="left:1215px;top:145px;width:60px;height:26px"></div>
<div class="a" style="left:1275px;top:145px;width:60px;height:27px;background:#b9b9b9;border-radius:5px"></div>
<div class="dbtn" style="left:1335px;top:145px;width:60px;height:26px"></div>
<div class="dbtn" style="left:1395px;top:145px;width:60px;height:26px"></div>
<div class="a" style="left:1155px;top:171px;width:300px;height:388px;background:#fff;border:1px solid #c3c3c3;border-right:none"></div>
<div class="a" style="left:1156px;top:193px;width:298px;height:20px;background:#0a4ad9"></div>
<div class="a" style="left:1181px;top:179px;width:16px;height:10px;border:1px solid #000;background:#fff"></div>
<div class="a" style="left:1181px;top:199px;width:16px;height:10px;background:#3b4251"></div>
<div class="a" style="left:1203px;top:175px;font-size:13px;color:#000;line-height:15px">0</div>
<div class="a" style="left:1203px;top:195px;font-size:13px;color:#fff;line-height:15px">Texto</div>
<div class="a" style="left:1155px;top:580px;width:300px;height:1px;background:#cfcfcf"></div>
<div class="a" style="left:1155px;top:563px;width:300px;text-align:center;font-size:12px;color:#333;padding-left:37px;line-height:14px">Filtro de selección</div>
<div class="a" style="left:1167px;top:594px;width:276px;height:136px;background:#e3e3e3;border-top:1px solid #dadada"></div>
<div class="a" style="left:1174px;top:585px;font-size:11px;color:#222;line-height:12px">Filtro</div>
<div class="lbl" style="left:1182px;top:618px">Tipo:</div>
<div class="cb" style="left:1278px;top:614px;width:149px;height:22px"><div class="tx">Texto</div><div class="st"><svg width="8" height="12" viewBox="0 0 8 10" preserveAspectRatio="none"><path d="M1 3.8 L4 1 L7 3.8 M1 6.2 L4 9 L7 6.2" stroke="#fff" stroke-width="1.3" fill="none"/></svg></div></div>
<div class="lbl" style="left:1182px;top:644px">Característica:</div>
<div class="cb" style="left:1278px;top:640px;width:149px;height:22px"><div class="tx">Color</div><div class="st"><svg width="8" height="12" viewBox="0 0 8 10" preserveAspectRatio="none"><path d="M1 3.8 L4 1 L7 3.8 M1 6.2 L4 9 L7 6.2" stroke="#fff" stroke-width="1.3" fill="none"/></svg></div></div>
<div class="lbl" style="left:1182px;top:670px">Comparación:</div>
<div class="cb" style="left:1278px;top:666px;width:149px;height:22px"><div class="tx">= (es)</div><div class="st"><svg width="8" height="12" viewBox="0 0 8 10" preserveAspectRatio="none"><path d="M1 3.8 L4 1 L7 3.8 M1 6.2 L4 9 L7 6.2" stroke="#fff" stroke-width="1.3" fill="none"/></svg></div></div>
<div class="lbl" style="left:1182px;top:696px">Valor:</div>
<div class="cb" style="left:1278px;top:692px;width:149px;height:22px"><div class="a" style="left:3px;top:5px;width:16px;height:10px;background:#ffff00;border:1px solid #222"></div><div class="tx" style="left:23px">Amarillo</div><div class="st"><svg width="8" height="12" viewBox="0 0 8 10" preserveAspectRatio="none"><path d="M1 3.8 L4 1 L7 3.8 M1 6.2 L4 9 L7 6.2" stroke="#fff" stroke-width="1.3" fill="none"/></svg></div></div>
<div class="dbtn" style="left:1167px;top:745px;width:69px;height:26px"></div>
<div class="dbtn" style="left:1236px;top:745px;width:69px;height:26px"></div>
<div class="dbtn" style="left:1305px;top:745px;width:69px;height:26px"></div>
<div class="dbtn" style="left:1374px;top:745px;width:69px;height:26px"></div>
<svg class="a" style="left:1150px;top:120px" width="350" height="680">
<defs>
<g id="eye"><path d="M-7 0.5 Q-3.5 -5.5 0.5 -5.2 Q5 -5.5 7.5 0 Q4.5 5.3 0 5.2 Q-4.5 5.3 -7 0.5 Z" fill="#000"/><path d="M-4.3 0.8 Q-2 -2.8 0.6 -2.8 Q3.5 -2.8 4.6 0.6 Q3 3.4 0.3 3.3 Q-2.6 3.4 -4.3 0.8 Z" fill="#fff"/><path d="M-1.5 -2.5 Q0.5 -0.5 2.5 -2.5 L2.5 1.8 Q0.5 3 -1.5 1.8 Z" fill="#000"/></g>
<g id="lock"><path d="M-3.5 0 L-3.5 -3 Q-3.5 -7.2 0 -7.2 Q3.5 -7.2 3.5 -3 L3.5 0" fill="none" stroke="#b4b4b4" stroke-width="1.8"/><rect x="-5" y="-0.5" width="10" height="7.5" fill="#b4b4b4"/></g>
<g id="wclose"><circle r="7" fill="#6b6b6b"/><path d="M-3 -3 L3 3 M3 -3 L-3 3" stroke="#fff" stroke-width="1.8"/></g>
<g id="wfloat"><circle r="7" fill="#6b6b6b"/><rect x="-2" y="-4" width="6" height="5" fill="none" stroke="#fff" stroke-width="1.2"/><rect x="-4.5" y="-1" width="6" height="5" fill="#6b6b6b" stroke="#fff" stroke-width="1.2"/></g>
<g id="pencil2"><path d="M-6 6 L-5 3 L4.5 -6.5 L6.5 -4.5 L-3 5 Z" fill="#e0a83a" stroke="#7a5010" stroke-width="0.6"/><path d="M3.5 -5.5 L5.5 -3.5" stroke="#e03030" stroke-width="2.2"/><path d="M-6 6 L-5 3 L-3 5 Z" fill="#333"/></g>
</defs>
<use href="#wclose" x="14" y="13"/><use href="#wfloat" x="32" y="13"/>
<use href="#wclose" x="14" y="449"/><use href="#wfloat" x="32" y="449"/>
<use href="#eye" x="35" y="37.6"/>
<g opacity="0.35"><use href="#eye" x="94.5" y="37.6"/></g>
<path d="M152.5 31 L156.5 31 L156.5 36 L161.5 36 L161.5 40 L156.5 40 L156.5 45 L152.5 45 L152.5 40 L147.5 40 L147.5 36 L152.5 36 Z" fill="#f00" stroke="#700" stroke-width="0.4"/>
<rect x="209" y="36" width="11" height="4" fill="#f00" stroke="#700" stroke-width="0.4"/>
<use href="#pencil2" x="275" y="38" transform="translate(275 38) scale(1.25) translate(-275 -38)"/>
<use href="#eye" x="273" y="62.5"/><use href="#lock" x="295" y="62.5"/>
<use href="#pencil2" x="251" y="83"/>
<use href="#eye" x="273" y="82.5"/><use href="#lock" x="295" y="82.5"/>
</svg>
<svg class="a" style="left:1455px;top:120px" width="45" height="680">
<rect x="7" y="11" width="2" height="2" fill="#a0a0a0"/>
<rect x="13" y="11" width="2" height="2" fill="#a0a0a0"/>
<rect x="19" y="11" width="2" height="2" fill="#a0a0a0"/>
<rect x="25" y="11" width="2" height="2" fill="#a0a0a0"/>
<rect x="31" y="11" width="2" height="2" fill="#a0a0a0"/>
<rect x="1" y="15" width="44" height="42" rx="6" fill="#b9b9b9"/>
<rect x="1" y="210" width="44" height="42" rx="6" fill="#b9b9b9"/>
<rect x="1" y="313" width="44" height="42" rx="6" fill="#b9b9b9"/>
<line x1="3" y1="156.5" x2="45" y2="156.5" stroke="#777" stroke-dasharray="1 3"/>
<line x1="3" y1="305.5" x2="45" y2="305.5" stroke="#777" stroke-dasharray="1 3"/>
<line x1="3" y1="408.5" x2="45" y2="408.5" stroke="#777" stroke-dasharray="1 3"/>
<rect x="8.5" y="22.5" width="27" height="27" fill="#fff" stroke="#222" stroke-width="1"/>
<rect x="8.5" y="22.5" width="27" height="4.5" fill="#000"/>
<rect x="9.5" y="23.3" width="2.6" height="2.6" fill="#fff"/>
<rect x="8.5" y="69.5" width="27" height="27" fill="#fff" stroke="#222" stroke-width="1"/>
<rect x="8.5" y="69.5" width="27" height="4.5" fill="#000"/>
<rect x="9.5" y="70.3" width="2.6" height="2.6" fill="#fff"/>
<rect x="8.5" y="115.5" width="27" height="27" fill="#fff" stroke="#222" stroke-width="1"/>
<rect x="8.5" y="115.5" width="27" height="4.5" fill="#000"/>
<rect x="9.5" y="116.3" width="2.6" height="2.6" fill="#fff"/>
<rect x="8.5" y="171.5" width="27" height="27" fill="#fff" stroke="#222" stroke-width="1"/>
<rect x="8.5" y="171.5" width="27" height="4.5" fill="#000"/>
<rect x="9.5" y="172.3" width="2.6" height="2.6" fill="#fff"/>
<rect x="8.5" y="217.5" width="27" height="27" fill="#fff" stroke="#222" stroke-width="1"/>
<rect x="8.5" y="217.5" width="27" height="4.5" fill="#000"/>
<rect x="9.5" y="218.3" width="2.6" height="2.6" fill="#fff"/>
<rect x="8.5" y="264.5" width="27" height="27" fill="#fff" stroke="#222" stroke-width="1"/>
<rect x="8.5" y="264.5" width="27" height="4.5" fill="#000"/>
<rect x="9.5" y="265.3" width="2.6" height="2.6" fill="#fff"/>
<rect x="8.5" y="320.5" width="27" height="27" fill="#fff" stroke="#222" stroke-width="1"/>
<rect x="8.5" y="320.5" width="27" height="4.5" fill="#000"/>
<rect x="9.5" y="321.3" width="2.6" height="2.6" fill="#fff"/>
<rect x="8.5" y="367.5" width="27" height="27" fill="#fff" stroke="#222" stroke-width="1"/>
<rect x="8.5" y="367.5" width="27" height="4.5" fill="#000"/>
<rect x="9.5" y="368.3" width="2.6" height="2.6" fill="#fff"/>
<path d="M14 34 L22 31 L22 43 L14 46 Z" fill="#888" stroke="#333" stroke-width="0.7"/><path d="M17 33 L28 30 L28 42 L17 45 Z" fill="#fff" stroke="#333" stroke-width="0.8"/><path d="M20 41 L25 34 L25 41 Z" fill="none" stroke="#e33" stroke-width="0.9"/>
<rect x="14" y="81" width="10" height="7.5" fill="#fdf0c0" stroke="#333" stroke-width="0.8"/><circle cx="23" cy="88" r="4.8" fill="#fdf0c0" fill-opacity="0.85" stroke="#333" stroke-width="0.8"/>
<rect x="13" y="125" width="18" height="12" rx="2.5" fill="#f4f4f4" stroke="#c8d4e8" stroke-width="0.9"/>
<rect x="12" y="180" width="3" height="2.5" fill="#000"/><rect x="18" y="180" width="14" height="2.5" fill="#fff" stroke="#333" stroke-width="0.6"/>
<rect x="12" y="184" width="3" height="2.5" fill="#000"/><rect x="18" y="184" width="14" height="2.5" fill="#fff" stroke="#333" stroke-width="0.6"/>
<rect x="12" y="188" width="3" height="2.5" fill="#000"/><rect x="18" y="188" width="14" height="2.5" fill="#fff" stroke="#333" stroke-width="0.6"/>
<path d="M14 226 L30 226 L24 232 L24 240 L21 238 L21 232 Z" fill="#999" stroke="#444" stroke-width="0.6"/>
<path d="M13 273 L19 278 L19 284 L13 288 Z" fill="#fff" stroke="#333" stroke-width="0.7"/><rect x="19" y="277" width="10" height="8" rx="1.5" fill="#777"/><line x1="11" y1="281" x2="33" y2="281" stroke="#f66" stroke-width="0.6" stroke-dasharray="1.2 1"/>
<line x1="11" y1="329" x2="25" y2="329" stroke="#999" stroke-width="0.6"/>
<line x1="11" y1="332" x2="25" y2="332" stroke="#999" stroke-width="0.6"/>
<line x1="11" y1="335" x2="25" y2="335" stroke="#999" stroke-width="0.6"/>
<line x1="11" y1="338" x2="25" y2="338" stroke="#999" stroke-width="0.6"/>
<line x1="8.5" y1="343" x2="35.5" y2="343" stroke="#333" stroke-width="0.7"/><line x1="18" y1="345" x2="33" y2="345" stroke="#888" stroke-width="0.8"/>
<rect x="16" y="376" width="12" height="15" rx="1" fill="#c9871f"/><rect x="17.5" y="378" width="9" height="12" fill="#f4f4f4"/><rect x="19" y="375" width="6" height="3" fill="#999"/>
<path d="M10 429.2 L16 429.2 Q19.5 429.2 19.5 433.2 Q19.5 437 16 437 L12.3 437 M16 437 Q19.5 437 19.5 441 Q19.5 445.2 16 445.2 L10 445.2 M23.9 428.8 L29 428.8 Q34.5 428.8 34.5 435 L34.5 439 Q34.5 445.2 29 445.2 L23.9 445.2 Z" fill="none" stroke="#111" stroke-width="1.5"/>
</svg>
<svg class="a" style="left:1160px;top:745px" width="290" height="26">
<g stroke-width="0.9">
<rect x="34" y="6.5" width="13" height="13" fill="#ff8c8c" stroke="#333" stroke-dasharray="1.5 1.2"/>
<rect x="103.5" y="6.5" width="11" height="10.5" fill="#ff8c8c" stroke="#333"/>
<rect x="106.7" y="9.7" width="10.5" height="10" fill="#ff8c8c" stroke="#333" stroke-dasharray="1.5 1.2"/>
<rect x="172.5" y="6.5" width="11" height="10.5" fill="#ff8c8c" stroke="#333"/>
<rect x="175.7" y="9.7" width="10.5" height="10" fill="none" stroke="#333" stroke-dasharray="1.5 1.2"/>
<rect x="176.2" y="10.2" width="7" height="6.5" fill="#fff"/>
<rect x="241.5" y="6.5" width="11" height="10.5" fill="#fff" stroke="#333"/>
<rect x="244.7" y="9.7" width="10.5" height="10" fill="none" stroke="#333" stroke-dasharray="1.5 1.2"/>
<rect x="245.2" y="10.2" width="7" height="6.5" fill="#ff8c8c"/>
</g></svg>
<div class="a" style="left:565px;top:235px;width:369px;height:372px;background:#ececec;border:2.5px solid #a9a9a9;box-shadow:0 0 1px rgba(0,0,0,0.4)"></div>
<div class="lbl" style="left:587px;top:261px">Capa principal:</div>
<div class="cb" style="left:699px;top:257px;width:213px;height:21px"><div class="st"><svg width="8" height="10" viewBox="0 0 8 10"><path d="M1 3.8 L4 1 L7 3.8 M1 6.2 L4 9 L7 6.2" stroke="#fff" stroke-width="1.3" fill="none"/></svg></div></div>
<div class="lbl" style="left:587px;top:292px">Nombre de capa:</div>
<div class="a" style="left:699px;top:290px;width:213px;height:19.5px;background:#fff;border-bottom:1px solid #c4c4c4;border-top:1px solid #e0e0e0"></div>
<div class="lbl" style="left:700px;top:292px;color:#111">Números catastrales</div>
<div class="a" style="left:587px;top:324px;width:326px;height:168px;background:#e3e3e3;border-top:1px solid #dadada"></div>
<div class="a" style="left:594px;top:316px;font-size:11px;color:#222;line-height:12px">Atributos</div>
<div class="lbl" style="left:500px;width:211px;text-align:right;top:348.4px">Color:</div>
<div class="cb" style="left:719px;top:345px;width:179px;height:20.5px"><div class="a" style="left:3px;top:5px;width:16px;height:9px;background:#000"></div><div class="tx" style="left:25px">Negro</div><div class="st"><svg width="8" height="10" viewBox="0 0 8 10"><path d="M1 3.8 L4 1 L7 3.8 M1 6.2 L4 9 L7 6.2" stroke="#fff" stroke-width="1.3" fill="none"/></svg></div></div>
<div class="lbl" style="left:500px;width:211px;text-align:right;top:379.6px">Grosor de la línea:</div>
<div class="cb" style="left:719px;top:377px;width:179px;height:20.5px"><div class="a" style="left:4px;top:9.5px;width:15px;height:1.2px;background:#222"></div><div class="tx" style="left:25px">0.25mm (ISO)</div><div class="st"><svg width="8" height="10" viewBox="0 0 8 10"><path d="M1 3.8 L4 1 L7 3.8 M1 6.2 L4 9 L7 6.2" stroke="#fff" stroke-width="1.3" fill="none"/></svg></div></div>
<div class="lbl" style="left:500px;width:211px;text-align:right;top:411.8px">Tipo de línea:</div>
<div class="cb" style="left:719px;top:408.5px;width:179px;height:20.5px"><div class="tx" style="left:2px">Contínua</div><div class="st"><svg width="8" height="10" viewBox="0 0 8 10"><path d="M1 3.8 L4 1 L7 3.8 M1 6.2 L4 9 L7 6.2" stroke="#fff" stroke-width="1.3" fill="none"/></svg></div></div>
<div class="chk" style="left:602px;top:440px"><svg width="14" height="14"><path d="M3.3 7.3 L5.8 10 L10.8 3.6" stroke="#fff" stroke-width="1.8" fill="none" stroke-linecap="round" stroke-linejoin="round"/></svg></div><div class="lbl" style="left:620px;top:440.2px">Trazable</div>
<div class="chk" style="left:602px;top:463px"><svg width="14" height="14"><path d="M3.3 7.3 L5.8 10 L10.8 3.6" stroke="#fff" stroke-width="1.8" fill="none" stroke-linecap="round" stroke-linejoin="round"/></svg></div><div class="lbl" style="left:620px;top:462.7px">Ajustable</div>
<div class="chk" style="left:587px;top:507px"><svg width="14" height="14"><path d="M3.3 7.3 L5.8 10 L10.8 3.6" stroke="#fff" stroke-width="1.8" fill="none" stroke-linecap="round" stroke-linejoin="round"/></svg></div><div class="lbl" style="left:605px;top:507.2px;letter-spacing:0.08px">Mover la selección a la nueva capa</div>
<div class="btn" style="left:740px;top:567px;width:81px;height:20px;background:#fff;box-shadow:0 0 0 0.5px rgba(0,0,0,0.18),0 1px 1px rgba(0,0,0,0.15);color:#111">Cancelar</div>
<div class="btn" style="left:837px;top:567px;width:75px;height:20px;background:linear-gradient(#3b93fb,#0d70f2);box-shadow:0 0.5px 1px rgba(0,0,0,0.2);color:#fff">Aceptar</div>
<svg class="a" style="left:705px;top:466px" width="96" height="96">
<defs><radialGradient id="ring" cx="48" cy="47.7" r="39" gradientUnits="userSpaceOnUse"><stop offset="0.78" stop-color="#b0c4d8" stop-opacity="0"/><stop offset="0.86" stop-color="#b8cadc" stop-opacity="0.55"/><stop offset="0.95" stop-color="#a6bcd0" stop-opacity="0.85"/><stop offset="1" stop-color="#a6bcd0" stop-opacity="0"/></radialGradient></defs>
<circle cx="48" cy="47.7" r="39" fill="url(#ring)"/>
<path d="M48 48.2 L48 69.6 L53 64.8 L57 73.6 L61 71.8 L57 63.4 L63.5 63.2 Z" fill="#fff" stroke="#000" stroke-width="1.3" stroke-linejoin="round"/>
</svg>
<div class="a" style="left:2px;top:807px;font-size:10px;letter-spacing:0.25px;color:#1a1a1a;line-height:12px">389.253,262.9411</div>
<div class="a" style="left:2px;top:827.3px;font-size:10px;letter-spacing:0.1px;color:#1a1a1a;line-height:12px">@389.253,262.9411</div>
<div class="a" style="left:253px;top:802px;width:1px;height:40px;background:#8a8a8a"></div>
<div class="a" style="left:256px;top:807px;font-size:10px;letter-spacing:0.25px;color:#1a1a1a;line-height:12px">469.7402&lt;34°</div>
<div class="a" style="left:256px;top:827.3px;font-size:10px;letter-spacing:0.1px;color:#1a1a1a;line-height:12px">@469.7402&lt;34°</div>
<div class="a" style="left:506px;top:819px;width:6px;height:6px;border-radius:3px;background:#c6c6c6"></div>
<div class="a" style="left:940px;top:819px;width:6px;height:6px;border-radius:3px;background:#c6c6c6"></div>
<div class="a" style="left:1269px;top:819px;width:6px;height:6px;border-radius:3px;background:#c6c6c6"></div>
<div class="a" style="left:569px;top:817px;font-size:10px;letter-spacing:0.1px;color:#1a1a1a;line-height:12px">Seleccionar entidad o región</div>
<div class="a" style="left:949px;top:811px;font-size:10px;letter-spacing:0.1px;color:#1a1a1a;line-height:12px">Las entidades seleccionadas:</div>
<div class="a" style="left:949px;top:822px;font-size:10px;letter-spacing:0.1px;color:#1a1a1a;line-height:12px">22 Textos en capa "Texto".</div>
<svg class="a" style="left:715px;top:804px" width="24" height="34">
<path d="M11 2.5 Q19.5 2.5 19.5 12 L19.5 22 Q19.5 31.5 11 31.5 Q2.5 31.5 2.5 22 L2.5 12 Q2.5 2.5 11 2.5 Z" fill="#fff" stroke="#333" stroke-width="0.9"/>
<path d="M2.5 16 Q11 13 19.5 16" fill="none" stroke="#333" stroke-width="0.9"/>
<path d="M11 3 L11 14.5" stroke="#333" stroke-width="0.9"/>
<rect x="9.5" y="5.5" width="3" height="7" rx="1.5" fill="#fff" stroke="#333" stroke-width="0.8"/>
</svg>
<!-- command bar icon -->
<svg class="a" style="left:1128px;top:772px" width="26" height="26"><rect x="4.5" y="7.5" width="16" height="11" fill="#fff" stroke="#111" stroke-width="1"/><rect x="4.5" y="7.5" width="16" height="3" fill="#000"/><rect x="17" y="8" width="2" height="1.5" fill="#fff"/></svg>
</body></html>
